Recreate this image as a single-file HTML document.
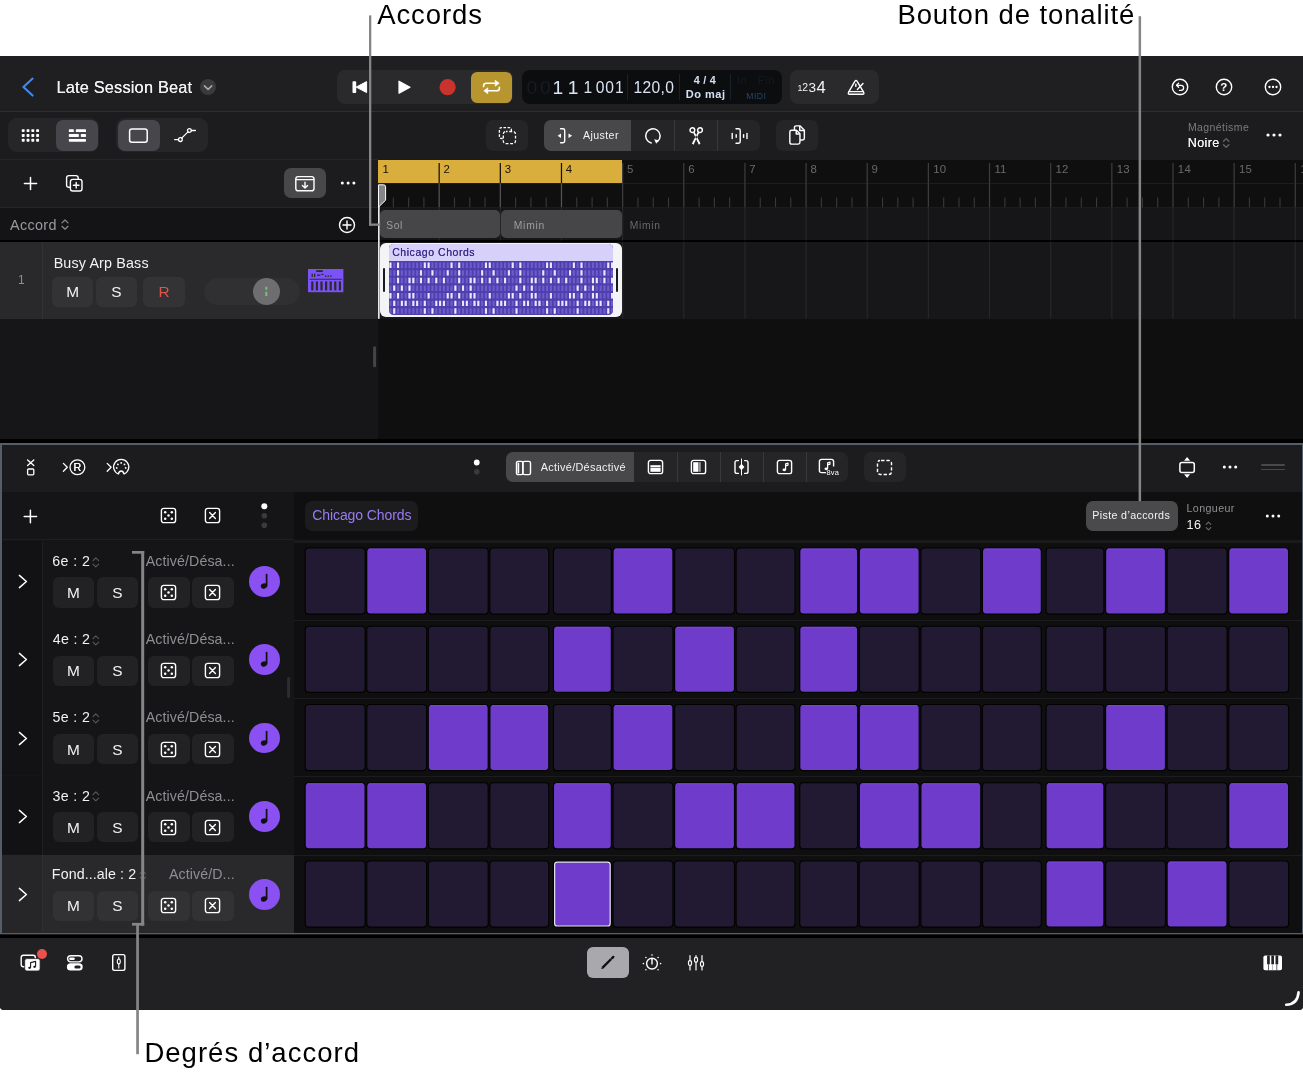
<!DOCTYPE html>
<html lang="fr"><head><meta charset="utf-8"><title>Logic Pro — Step Sequencer</title>
<style>
html,body{margin:0;padding:0;background:#fff;}
body{width:1303px;height:1075px;position:relative;overflow:hidden;font-family:"Liberation Sans",sans-serif;}
#app div,#app svg,#app span.a{position:absolute;box-sizing:border-box;}
#app{position:absolute;left:0;top:0;width:1303px;height:1075px;overflow:hidden;will-change:transform;}
svg{overflow:visible;}
.t{margin:0;}
</style></head><body><div id="app">
<div style="left:0px;top:56px;width:1303px;height:954px;background:#1f1f21;border-radius:0 0 4px 4px;"></div>
<div style="left:0px;top:111px;width:1303px;height:1px;background:#2f2f31;"></div>
<svg style="left:20px;top:76px;" width="16" height="22" viewBox="0 0 16 22"><path d="M12.6 2.6 L3.4 11.1 L12.6 19.6" fill="none" stroke="#3d8bf0" stroke-width="2.1" stroke-linecap="round" stroke-linejoin="round"/></svg>
<div class="t" style="top:77.00px;height:21px;line-height:21px;font-size:16.4px;color:#f2f2f4;white-space:nowrap;letter-spacing:0.16px;left:56.49px;text-shadow:0 0 0.4px #f2f2f4;">Late Session Beat</div>
<div style="left:199.6px;top:78.9px;width:16.2px;height:16.2px;background:#3a3a3c;border-radius:9px;"></div>
<svg style="left:199.6px;top:78.9px;" width="16.2" height="16.2" viewBox="0 0 16.2 16.2"><path d="M4.4 6.9 L8.1 10.4 L11.8 6.9" fill="none" stroke="#a9a9ae" stroke-width="1.5" stroke-linecap="round" stroke-linejoin="round"/></svg>
<div style="left:337px;top:70px;width:175.5px;height:33.5px;background:#2a2a2c;border-radius:8px;"></div>
<svg style="left:350px;top:78px;" width="20" height="18" viewBox="0 0 20 18"><rect x="2.5" y="3.3" width="3.7" height="11.6" rx="0.7" fill="#fff"/><path d="M16.6 3.6 L16.6 14.6 L6.2 9.1 Z" fill="#fff" stroke="#fff" stroke-width="1" stroke-linejoin="round"/></svg>
<svg style="left:396px;top:78px;" width="18" height="18" viewBox="0 0 18 18"><path d="M3 3.2 L14 9.2 L3 15.2 Z" fill="#fff" stroke="#fff" stroke-width="1.2" stroke-linejoin="round"/></svg>
<svg style="left:437px;top:77px;" width="22" height="22" viewBox="0 0 22 22"><circle cx="10.6" cy="10.2" r="8.1" fill="#c9332e"/></svg>
<div style="left:470.5px;top:71.8px;width:41.7px;height:30.8px;background:#b7962f;border-radius:6px;"></div>
<svg style="left:481px;top:78px;" width="21" height="18" viewBox="0 0 21 18"><g fill="none" stroke="#fff" stroke-width="1.6" stroke-linecap="round" stroke-linejoin="round"><path d="M2.6 8.6 V7.8 Q2.6 5.2 5.2 5.2 H15"/><path d="M18.4 9.4 V10.2 Q18.4 12.8 15.8 12.8 H6"/></g><path d="M14.2 2.2 L18.2 5.2 L14.2 8.2 Z M6.8 9.8 L2.8 12.8 L6.8 15.8 Z" fill="#fff" stroke="#fff" stroke-width="0.6" stroke-linejoin="round"/></svg>
<div style="left:522px;top:70px;width:259.5px;height:33.5px;background:#0c0d0f;border-radius:8px;"></div>
<div class="t" style="top:75.00px;height:25px;line-height:25px;font-size:19.2px;color:#151c23;white-space:nowrap;letter-spacing:2.73px;left:526.53px;">00</div>
<div class="t" style="top:75.00px;height:25px;line-height:25px;font-size:19.2px;color:#d9e5f4;white-space:nowrap;left:552.4px;">1</div>
<div class="t" style="top:75.00px;height:25px;line-height:25px;font-size:19.2px;color:#d9e5f4;white-space:nowrap;left:567.8px;">1</div>
<div class="t" style="top:78.00px;height:20px;line-height:20px;font-size:15.6px;color:#d9e5f4;white-space:nowrap;left:583.6px;">1</div>
<div class="t" style="top:78.00px;height:20px;line-height:20px;font-size:15.6px;color:#d9e5f4;white-space:nowrap;letter-spacing:0.93px;left:595.78px;">001</div>
<div style="left:626.9px;top:74px;width:1px;height:25.5px;background:#18222c;"></div>
<div class="t" style="top:78.00px;height:20px;line-height:20px;font-size:15.6px;color:#d9e5f4;white-space:nowrap;letter-spacing:0.38px;left:633.43px;">120,0</div>
<div style="left:678.7px;top:74px;width:1px;height:25.5px;background:#18222c;"></div>
<div class="t" style="top:73.00px;height:14px;line-height:14px;font-size:10.8px;color:#d3e0f2;white-space:nowrap;font-weight:700;letter-spacing:0.2px;left:693.84px;">4 / 4</div>
<div class="t" style="top:87.00px;height:14px;line-height:14px;font-size:11px;color:#d3e0f2;white-space:nowrap;font-weight:700;letter-spacing:0.52px;left:685.78px;">Do maj</div>
<div style="left:730.4px;top:74px;width:1px;height:25.5px;background:#18222c;"></div>
<div class="t" style="top:74.00px;height:14px;line-height:14px;font-size:10.4px;color:#141b23;white-space:nowrap;letter-spacing:0.93px;left:737.06px;">In</div>
<div class="t" style="top:74.00px;height:14px;line-height:14px;font-size:10.4px;color:#141b23;white-space:nowrap;letter-spacing:1.08px;left:757.67px;">Fin</div>
<div class="t" style="top:91.00px;height:11px;line-height:11px;font-size:8.6px;color:#294467;white-space:nowrap;letter-spacing:0.54px;left:746.21px;">MIDI</div>
<div style="left:789.5px;top:70px;width:89.5px;height:33.5px;background:#2a2a2c;border-radius:8px;"></div>
<div class="t" style="top:83.00px;height:11px;line-height:11px;font-size:8.8px;color:#f2f2f4;white-space:nowrap;left:797.6px;">1</div>
<div class="t" style="top:81.00px;height:14px;line-height:14px;font-size:10.4px;color:#f2f2f4;white-space:nowrap;left:802.3px;">2</div>
<div class="t" style="top:79.00px;height:18px;line-height:18px;font-size:13.6px;color:#f2f2f4;white-space:nowrap;left:808.6px;">3</div>
<div class="t" style="top:77.00px;height:22px;line-height:22px;font-size:16.6px;color:#f2f2f4;white-space:nowrap;left:816.6px;">4</div>
<svg style="left:846px;top:77px;" width="20" height="20" viewBox="0 0 20 20"><g fill="none" stroke="#fff" stroke-width="1.4" stroke-linejoin="round" stroke-linecap="round"><path d="M9 4.2 Q10 2.6 11 4.2 L17.6 15.2 Q18.6 17.2 16.6 17.2 H3.6 Q1.6 17.2 2.6 15.2 Z"/><path d="M3.4 14.6 H16.8"/><path d="M11.4 12.4 L17 6.4"/><path d="M9.8 7.2 V9.4"/></g></svg>
<svg style="left:1169.8px;top:77.2px;" width="20" height="20" viewBox="0 0 20 20"><circle cx="10" cy="10" r="7.7" fill="none" stroke="#fff" stroke-width="1.4"/><g fill="none" stroke="#fff" stroke-width="1.3" stroke-linecap="round" stroke-linejoin="round"><path d="M6.8 8.3 H11 Q13.6 8.3 13.6 10.7 Q13.6 13.3 11 13.3 H9.4"/><path d="M8.6 6.3 L6.5 8.3 L8.6 10.3"/></g></svg>
<svg style="left:1213.7px;top:77.2px;" width="20" height="20" viewBox="0 0 20 20"><circle cx="10" cy="10" r="7.7" fill="none" stroke="#fff" stroke-width="1.4"/></svg>
<svg style="left:1263.3px;top:77.2px;" width="20" height="20" viewBox="0 0 20 20"><circle cx="10" cy="10" r="7.7" fill="none" stroke="#fff" stroke-width="1.4"/><circle cx="6.5" cy="10" r="1.15" fill="#fff"/><circle cx="10" cy="10" r="1.15" fill="#fff"/><circle cx="13.5" cy="10" r="1.15" fill="#fff"/></svg>
<div class="t" style="top:80.00px;height:15px;line-height:15px;font-size:11.5px;color:#fff;white-space:nowrap;font-weight:700;left:1213.7px;width:20px;text-align:center;">?</div>
<div style="left:0px;top:112px;width:1303px;height:48px;background:#1c1c1e;"></div>
<div style="left:0px;top:159px;width:378px;height:1px;background:#262628;"></div>
<div style="left:8.1px;top:118.2px;width:90.5px;height:34px;background:#262629;border-radius:9px;"></div>
<div style="left:56.2px;top:120px;width:41.9px;height:30.5px;background:#47474b;border-radius:7px;"></div>
<div style="left:116.4px;top:118.2px;width:91.3px;height:34px;background:#262629;border-radius:9px;"></div>
<div style="left:117.7px;top:120px;width:41.9px;height:30.5px;background:#47474b;border-radius:7px;"></div>
<svg style="left:20px;top:127px;" width="21" height="16" viewBox="0 0 21 16"><rect x="1.75" y="2.15" width="2.9" height="2.9" rx="0.7" fill="#fff"/><rect x="6.55" y="2.15" width="2.9" height="2.9" rx="0.7" fill="#fff"/><rect x="11.35" y="2.15" width="2.9" height="2.9" rx="0.7" fill="#fff"/><rect x="16.15" y="2.15" width="2.9" height="2.9" rx="0.7" fill="#fff"/><rect x="1.75" y="7.00" width="2.9" height="2.9" rx="0.7" fill="#fff"/><rect x="6.55" y="7.00" width="2.9" height="2.9" rx="0.7" fill="#fff"/><rect x="11.35" y="7.00" width="2.9" height="2.9" rx="0.7" fill="#fff"/><rect x="16.15" y="7.00" width="2.9" height="2.9" rx="0.7" fill="#fff"/><rect x="1.75" y="11.85" width="2.9" height="2.9" rx="0.7" fill="#fff"/><rect x="6.55" y="11.85" width="2.9" height="2.9" rx="0.7" fill="#fff"/><rect x="11.35" y="11.85" width="2.9" height="2.9" rx="0.7" fill="#fff"/><rect x="16.15" y="11.85" width="2.9" height="2.9" rx="0.7" fill="#fff"/></svg>
<svg style="left:67px;top:127px;" width="21" height="16" viewBox="0 0 21 16"><g fill="#fff"><rect x="1.85" y="2.2" width="5" height="2.9" rx="0.7"/><rect x="8.8" y="2.2" width="10.2" height="2.9" rx="0.7"/><rect x="1.85" y="7.05" width="10" height="2.9" rx="0.7"/><rect x="13.8" y="7.05" width="5.2" height="2.9" rx="0.7"/><rect x="1.85" y="11.9" width="17.15" height="2.9" rx="0.7"/></g></svg>
<svg style="left:128px;top:127px;" width="21" height="17" viewBox="0 0 21 17"><rect x="1.6" y="2" width="17.6" height="13.2" rx="2.2" fill="none" stroke="#fff" stroke-width="1.5"/></svg>
<svg style="left:173px;top:126px;" width="24" height="18" viewBox="0 0 24 18"><g fill="none" stroke="#fff" stroke-width="1.3" stroke-linecap="round"><path d="M1.6 13.6 H5.4"/><circle cx="7.4" cy="13.6" r="1.9"/><path d="M8.7 12.1 L15 5.9"/><circle cx="16.4" cy="4.5" r="1.9"/><path d="M18.4 4.5 H22.4"/></g></svg>
<div style="left:486.2px;top:120px;width:41.8px;height:30.6px;background:#252527;border-radius:7px;"></div>
<svg style="left:497px;top:125px;" width="21" height="21" viewBox="0 0 21 21"><g fill="none" stroke="#fff" stroke-width="1.3" stroke-linejoin="round"><path d="M5.7 13.5 H4.6 Q2.4 13.5 2.4 11.3 V4.8 Q2.4 2.6 4.6 2.6 H12.2 Q14.4 2.6 14.4 4.8 V5.9" stroke-dasharray="2.6 1.5"/><rect x="6.3" y="6.5" width="12.2" height="12.2" rx="2.6" stroke-dasharray="2.9 1.7" stroke-dashoffset="1.2"/></g></svg>
<div style="left:543.7px;top:120px;width:216.4px;height:30.6px;background:#252527;border-radius:7px;"></div>
<div style="left:543.7px;top:120px;width:87.8px;height:30.6px;background:#48484b;border-radius:7px 0 0 7px;"></div>
<div style="left:674.2px;top:120px;width:1px;height:30.6px;background:#39393b;"></div>
<div style="left:717.2px;top:120px;width:1px;height:30.6px;background:#39393b;"></div>
<svg style="left:556px;top:126px;" width="18" height="18" viewBox="0 0 18 18"><g fill="none" stroke="#fff" stroke-width="1.4" stroke-linecap="round" stroke-linejoin="round"><path d="M4.6 2.7 H7 Q8.7 2.7 8.7 4.4 V15 Q8.7 16.7 7 16.7 H4.6"/></g><path d="M1.6 9.7 L5 7.5 V11.9 Z" fill="#fff"/><path d="M16.1 9.7 L12.5 7.4 V12 Z" fill="#fff"/></svg>
<div class="t" style="top:128.00px;height:14px;line-height:14px;font-size:10.6px;color:#f2f2f4;white-space:nowrap;letter-spacing:0.43px;left:582.9px;">Ajuster</div>
<svg style="left:643px;top:125.8px;" width="20" height="20" viewBox="0 0 20 20"><g fill="none" stroke="#fff" stroke-width="1.5" stroke-linecap="round"><path d="M8.2 16.9 A7.2 7.2 0 1 1 14.6 15.4"/></g><path d="M11.2 13.2 L15.6 14.2 L13.2 17.8 Z" fill="#fff"/></svg>
<svg style="left:685px;top:124.8px;" width="22.4" height="22.4" viewBox="0 0 20 20"><g fill="none" stroke="#fff" stroke-width="1.3" stroke-linecap="round"><circle cx="6.6" cy="4.6" r="2.1"/><circle cx="13.4" cy="4.6" r="2.1"/></g><path d="M7.2 6.6 L8.6 6.2 L13.8 16.6 L12.4 17.6 Z M12.8 6.6 L11.4 6.2 L6.2 16.6 L7.6 17.6 Z" fill="#fff"/></svg>
<svg style="left:728.6px;top:125.6px;" width="20" height="20" viewBox="0 0 20 20"><g fill="none" stroke="#fff" stroke-width="1.4" stroke-linecap="round" stroke-linejoin="round"><path d="M7 2.8 H9.6 Q11.2 2.8 11.2 4.4 V15.6 Q11.2 17.2 9.6 17.2 H7"/><path d="M3.2 7.4 V12.6"/><path d="M7.2 8.8 V11.2"/><path d="M14.6 8.8 V11.2"/><path d="M18 7.4 V12.6"/></g></svg>
<div style="left:775.6px;top:120px;width:42px;height:30.6px;background:#252527;border-radius:7px;"></div>
<svg style="left:784.6px;top:123.2px;" width="24.2" height="24.2" viewBox="0 0 22 22"><g fill="none" stroke="#fff" stroke-width="1.3" stroke-linejoin="round"><path d="M8.6 6.6 V4.2 Q8.6 2.6 10.2 2.6 H13.6 L17.6 6.6 V13.8 Q17.6 15.4 16 15.4 H13.8"/><path d="M13.4 2.8 V6.8 H17.4"/><path d="M4.4 8.2 Q4.4 6.6 6 6.6 H10.4 L13.6 9.8 V17.6 Q13.6 19.2 12 19.2 H6 Q4.4 19.2 4.4 17.6 Z"/><path d="M10.2 6.8 V10 H13.4"/></g></svg>
<div class="t" style="top:120.00px;height:14px;line-height:14px;font-size:10.5px;color:#7c7c80;white-space:nowrap;letter-spacing:0.4px;left:1187.96px;">Magnétisme</div>
<div class="t" style="top:135.00px;height:16px;line-height:16px;font-size:12.5px;color:#f5f5f7;white-space:nowrap;letter-spacing:0.4px;left:1187.8px;text-shadow:0 0 0.5px #f5f5f7;">Noire</div>
<svg style="left:1220.9px;top:136.2px;" width="10.4" height="13.8" viewBox="0 0 9 12"><g fill="none" stroke="#66666a" stroke-width="1.1" stroke-linecap="round" stroke-linejoin="round"><path d="M2.2 4.6 L4.5 2.3 L6.8 4.6"/><path d="M2.2 7.6 L4.5 9.9 L6.8 7.6"/></g></svg>
<svg style="left:1264.1px;top:130.3px;" width="20" height="10" viewBox="0 0 20 10"><circle cx="4" cy="5" r="1.6" fill="#fff"/><circle cx="10" cy="5" r="1.6" fill="#fff"/><circle cx="16" cy="5" r="1.6" fill="#fff"/></svg>
<div style="left:0px;top:160px;width:378px;height:47.5px;background:#1c1c1e;"></div>
<div style="left:0px;top:207px;width:378px;height:1px;background:#262628;"></div>
<svg style="left:22px;top:175px;" width="17" height="17" viewBox="0 0 17 17"><path d="M8.5 2.4 V14.6 M2.4 8.5 H14.6" stroke="#fff" stroke-width="1.5" stroke-linecap="round" fill="none"/></svg>
<svg style="left:64px;top:173px;" width="21" height="21" viewBox="0 0 21 21"><g fill="none" stroke="#fff" stroke-width="1.4" stroke-linejoin="round" stroke-linecap="round"><path d="M5.8 14.2 H4.9 Q2.6 14.2 2.6 11.9 V4.9 Q2.6 2.6 4.9 2.6 H11.9 Q14.2 2.6 14.2 4.9 V5.8"/><rect x="6.4" y="6.4" width="11.6" height="11.6" rx="2.3"/><path d="M12.2 9.4 V15 M9.4 12.2 H15"/></g></svg>
<div style="left:284px;top:167.7px;width:42px;height:30.4px;background:#48484a;border-radius:7px;"></div>
<svg style="left:294px;top:173.5px;" width="22" height="19" viewBox="0 0 22 19"><g fill="none" stroke="#fff" stroke-width="1.4" stroke-linejoin="round" stroke-linecap="round"><rect x="1.8" y="2.6" width="18.2" height="14.2" rx="2.4"/><path d="M2 5.6 H19.8"/><path d="M11 8.2 V13.6 M8.4 11.4 L11 13.9 L13.6 11.4"/></g></svg>
<svg style="left:338px;top:178px;" width="20" height="10" viewBox="0 0 20 10"><circle cx="4.3" cy="5" r="1.5" fill="#fff"/><circle cx="10.1" cy="5" r="1.5" fill="#fff"/><circle cx="15.9" cy="5" r="1.5" fill="#fff"/></svg>
<div style="left:0px;top:208px;width:378px;height:32.4px;background:#141416;"></div>
<div class="t" style="top:216.00px;height:19px;line-height:19px;font-size:14.4px;color:#9a9a9e;white-space:nowrap;letter-spacing:0.31px;left:10.1px;">Accord</div>
<svg style="left:60px;top:218px;" width="10" height="13" viewBox="0 0 10 13"><g fill="none" stroke="#8a8a8e" stroke-width="1.2" stroke-linecap="round" stroke-linejoin="round"><path d="M2 4.9 L5 2 L8 4.9"/><path d="M2 8.3 L5 11.2 L8 8.3"/></g></svg>
<svg style="left:337.3px;top:214.7px;" width="20" height="20" viewBox="0 0 20 20"><circle cx="10" cy="10" r="7.5" fill="none" stroke="#fff" stroke-width="1.4"/><path d="M10 6 V14 M6 10 H14" stroke="#fff" stroke-width="1.4" stroke-linecap="round"/></svg>
<div style="left:0px;top:240.4px;width:1303px;height:1.8px;background:#000;"></div>
<div style="left:0px;top:242.2px;width:378px;height:76.6px;background:#2a2a2c;"></div>
<div style="left:0px;top:242.2px;width:42px;height:76.6px;background:#29292b;"></div>
<div style="left:42px;top:242.2px;width:1px;height:76.6px;background:#333335;"></div>
<div class="t" style="top:272.00px;height:16px;line-height:16px;font-size:12px;color:#8e8e93;white-space:nowrap;left:11.3px;width:20px;text-align:center;">1</div>
<div class="t" style="top:254.00px;height:19px;line-height:19px;font-size:14.3px;color:#f2f2f4;white-space:nowrap;letter-spacing:0.16px;left:53.66px;">Busy Arp Bass</div>
<div style="left:51.8px;top:276.8px;width:41.6px;height:30.2px;background:#333335;border-radius:6px;"></div>
<div class="t" style="top:282.00px;height:20px;line-height:20px;font-size:15.4px;color:#f2f2f4;white-space:nowrap;left:52.6px;width:40px;text-align:center;">M</div>
<div style="left:95.7px;top:276.8px;width:41.6px;height:30.2px;background:#333335;border-radius:6px;"></div>
<div class="t" style="top:282.00px;height:20px;line-height:20px;font-size:15.4px;color:#f2f2f4;white-space:nowrap;left:96.5px;width:40px;text-align:center;">S</div>
<div style="left:143.3px;top:276.8px;width:41.6px;height:30.2px;background:#333335;border-radius:6px;"></div>
<div class="t" style="top:282.00px;height:20px;line-height:20px;font-size:15.4px;color:#e0524e;white-space:nowrap;left:144.1px;width:40px;text-align:center;">R</div>
<div style="left:204px;top:278.3px;width:96px;height:26.8px;background:#303032;border-radius:14px;"></div>
<div style="left:252.9px;top:278.3px;width:26.8px;height:26.8px;background:#6e6e70;border-radius:14px;"></div>
<svg style="left:264px;top:285px;" width="5" height="13" viewBox="0 0 5 13"><rect x="1.3" y="1.8" width="2" height="3" fill="#74c178"/><rect x="1.3" y="6.8" width="2" height="4.2" fill="#74c178"/></svg>
<svg style="left:308px;top:269px;" width="35.4" height="23.2" viewBox="0 0 35.4 23.2"><rect x="0" y="0" width="35.4" height="23.2" fill="#7b52f5"/><rect x="8.2" y="1.2" width="6.6" height="1.8" fill="#2a2a2c"/><rect x="3.6" y="4.6" width="1.2" height="3.4" fill="#2a2a2c"/><rect x="6" y="4.6" width="1.2" height="3.4" fill="#2a2a2c"/><rect x="9" y="5.6" width="3.4" height="1.2" fill="#2a2a2c"/><rect x="13.4" y="4.8" width="2" height="1.2" fill="#2a2a2c"/><rect x="17" y="6.4" width="1.4" height="1.4" fill="#2a2a2c"/><rect x="19.6" y="6.4" width="1.4" height="1.4" fill="#2a2a2c"/><rect x="22.2" y="6.4" width="1.4" height="1.4" fill="#2a2a2c"/><rect x="1.6" y="9.8" width="32.2" height="0.9" fill="#2a2a2c"/><rect x="3.2" y="12.4" width="2.2" height="9" fill="#2a2a2c"/><rect x="7.8" y="12.4" width="2.2" height="9" fill="#2a2a2c"/><rect x="12.4" y="12.4" width="2.2" height="9" fill="#2a2a2c"/><rect x="17.0" y="12.4" width="2.2" height="9" fill="#2a2a2c"/><rect x="21.6" y="12.4" width="2.2" height="9" fill="#2a2a2c"/><rect x="26.2" y="12.4" width="2.2" height="9" fill="#2a2a2c"/><rect x="30.8" y="12.4" width="2.2" height="9" fill="#2a2a2c"/></svg>
<div style="left:0px;top:318.8px;width:378px;height:120.6px;background:#161618;"></div>
<div style="left:378px;top:318.8px;width:925px;height:120.6px;background:#0f0f0f;"></div>
<svg style="left:370px;top:344px;" width="10" height="26" viewBox="0 0 10 26"><rect x="3.1" y="2.2" width="3" height="21" rx="1.5" fill="#444446"/></svg>
<div style="left:0px;top:439.4px;width:1303px;height:4.4px;background:#000;"></div>
<div style="left:378px;top:160px;width:925px;height:47.6px;background:#0f0f0f;"></div>
<div style="left:378px;top:183.2px;width:925px;height:1px;background:#1e1e20;"></div>
<div style="left:378px;top:207.4px;width:925px;height:33px;background:#161618;"></div>
<div style="left:378px;top:207.2px;width:925px;height:0.8px;background:#1c1c1e;"></div>
<div style="left:378px;top:242.2px;width:925px;height:76.6px;background:#171719;"></div>
<div style="left:378px;top:160px;width:244.2px;height:23.2px;background:#d9ae3c;"></div>
<svg style="left:378px;top:160px;overflow:hidden;" width="925" height="160" viewBox="0 0 925 160"><rect x="14.79" y="37.5" width="1.1" height="9.8" fill="#39393b"/><rect x="30.07" y="37.5" width="1.1" height="9.8" fill="#39393b"/><rect x="45.36" y="37.5" width="1.1" height="9.8" fill="#39393b"/><rect x="60.55" y="3" width="1.25" height="20.2" fill="#171208"/><rect x="60.55" y="23.2" width="1.25" height="24.2" fill="#545456"/><rect x="60.55" y="47.4" width="1.25" height="33" fill="#262628"/><rect x="60.55" y="82.2" width="1.25" height="76.6" fill="#262628"/><rect x="75.94" y="37.5" width="1.1" height="9.8" fill="#39393b"/><rect x="91.22" y="37.5" width="1.1" height="9.8" fill="#39393b"/><rect x="106.51" y="37.5" width="1.1" height="9.8" fill="#39393b"/><rect x="121.70" y="3" width="1.25" height="20.2" fill="#171208"/><rect x="121.70" y="23.2" width="1.25" height="24.2" fill="#545456"/><rect x="121.70" y="47.4" width="1.25" height="33" fill="#262628"/><rect x="121.70" y="82.2" width="1.25" height="76.6" fill="#262628"/><rect x="137.09" y="37.5" width="1.1" height="9.8" fill="#39393b"/><rect x="152.38" y="37.5" width="1.1" height="9.8" fill="#39393b"/><rect x="167.66" y="37.5" width="1.1" height="9.8" fill="#39393b"/><rect x="182.85" y="3" width="1.25" height="20.2" fill="#171208"/><rect x="182.85" y="23.2" width="1.25" height="24.2" fill="#545456"/><rect x="182.85" y="47.4" width="1.25" height="33" fill="#262628"/><rect x="182.85" y="82.2" width="1.25" height="76.6" fill="#262628"/><rect x="198.24" y="37.5" width="1.1" height="9.8" fill="#39393b"/><rect x="213.53" y="37.5" width="1.1" height="9.8" fill="#39393b"/><rect x="228.81" y="37.5" width="1.1" height="9.8" fill="#39393b"/><rect x="244.00" y="3" width="1.25" height="20.2" fill="#3c3c3e"/><rect x="244.00" y="23.2" width="1.25" height="24.2" fill="#3c3c3e"/><rect x="244.00" y="47.4" width="1.25" height="33" fill="#262628"/><rect x="244.00" y="82.2" width="1.25" height="76.6" fill="#262628"/><rect x="259.39" y="37.5" width="1.1" height="9.8" fill="#39393b"/><rect x="274.68" y="37.5" width="1.1" height="9.8" fill="#39393b"/><rect x="289.96" y="37.5" width="1.1" height="9.8" fill="#39393b"/><rect x="305.15" y="3" width="1.25" height="20.2" fill="#3c3c3e"/><rect x="305.15" y="23.2" width="1.25" height="24.2" fill="#3c3c3e"/><rect x="305.15" y="47.4" width="1.25" height="33" fill="#262628"/><rect x="305.15" y="82.2" width="1.25" height="76.6" fill="#262628"/><rect x="320.54" y="37.5" width="1.1" height="9.8" fill="#39393b"/><rect x="335.83" y="37.5" width="1.1" height="9.8" fill="#39393b"/><rect x="351.11" y="37.5" width="1.1" height="9.8" fill="#39393b"/><rect x="366.30" y="3" width="1.25" height="20.2" fill="#3c3c3e"/><rect x="366.30" y="23.2" width="1.25" height="24.2" fill="#3c3c3e"/><rect x="366.30" y="47.4" width="1.25" height="33" fill="#262628"/><rect x="366.30" y="82.2" width="1.25" height="76.6" fill="#262628"/><rect x="381.69" y="37.5" width="1.1" height="9.8" fill="#39393b"/><rect x="396.98" y="37.5" width="1.1" height="9.8" fill="#39393b"/><rect x="412.26" y="37.5" width="1.1" height="9.8" fill="#39393b"/><rect x="427.45" y="3" width="1.25" height="20.2" fill="#3c3c3e"/><rect x="427.45" y="23.2" width="1.25" height="24.2" fill="#3c3c3e"/><rect x="427.45" y="47.4" width="1.25" height="33" fill="#262628"/><rect x="427.45" y="82.2" width="1.25" height="76.6" fill="#262628"/><rect x="442.84" y="37.5" width="1.1" height="9.8" fill="#39393b"/><rect x="458.12" y="37.5" width="1.1" height="9.8" fill="#39393b"/><rect x="473.41" y="37.5" width="1.1" height="9.8" fill="#39393b"/><rect x="488.60" y="3" width="1.25" height="20.2" fill="#3c3c3e"/><rect x="488.60" y="23.2" width="1.25" height="24.2" fill="#3c3c3e"/><rect x="488.60" y="47.4" width="1.25" height="33" fill="#262628"/><rect x="488.60" y="82.2" width="1.25" height="76.6" fill="#262628"/><rect x="503.99" y="37.5" width="1.1" height="9.8" fill="#39393b"/><rect x="519.28" y="37.5" width="1.1" height="9.8" fill="#39393b"/><rect x="534.56" y="37.5" width="1.1" height="9.8" fill="#39393b"/><rect x="549.75" y="3" width="1.25" height="20.2" fill="#3c3c3e"/><rect x="549.75" y="23.2" width="1.25" height="24.2" fill="#3c3c3e"/><rect x="549.75" y="47.4" width="1.25" height="33" fill="#262628"/><rect x="549.75" y="82.2" width="1.25" height="76.6" fill="#262628"/><rect x="565.14" y="37.5" width="1.1" height="9.8" fill="#39393b"/><rect x="580.43" y="37.5" width="1.1" height="9.8" fill="#39393b"/><rect x="595.71" y="37.5" width="1.1" height="9.8" fill="#39393b"/><rect x="610.90" y="3" width="1.25" height="20.2" fill="#3c3c3e"/><rect x="610.90" y="23.2" width="1.25" height="24.2" fill="#3c3c3e"/><rect x="610.90" y="47.4" width="1.25" height="33" fill="#262628"/><rect x="610.90" y="82.2" width="1.25" height="76.6" fill="#262628"/><rect x="626.29" y="37.5" width="1.1" height="9.8" fill="#39393b"/><rect x="641.58" y="37.5" width="1.1" height="9.8" fill="#39393b"/><rect x="656.86" y="37.5" width="1.1" height="9.8" fill="#39393b"/><rect x="672.05" y="3" width="1.25" height="20.2" fill="#3c3c3e"/><rect x="672.05" y="23.2" width="1.25" height="24.2" fill="#3c3c3e"/><rect x="672.05" y="47.4" width="1.25" height="33" fill="#262628"/><rect x="672.05" y="82.2" width="1.25" height="76.6" fill="#262628"/><rect x="687.44" y="37.5" width="1.1" height="9.8" fill="#39393b"/><rect x="702.73" y="37.5" width="1.1" height="9.8" fill="#39393b"/><rect x="718.01" y="37.5" width="1.1" height="9.8" fill="#39393b"/><rect x="733.20" y="3" width="1.25" height="20.2" fill="#3c3c3e"/><rect x="733.20" y="23.2" width="1.25" height="24.2" fill="#3c3c3e"/><rect x="733.20" y="47.4" width="1.25" height="33" fill="#262628"/><rect x="733.20" y="82.2" width="1.25" height="76.6" fill="#262628"/><rect x="748.59" y="37.5" width="1.1" height="9.8" fill="#39393b"/><rect x="763.88" y="37.5" width="1.1" height="9.8" fill="#39393b"/><rect x="779.16" y="37.5" width="1.1" height="9.8" fill="#39393b"/><rect x="794.35" y="3" width="1.25" height="20.2" fill="#3c3c3e"/><rect x="794.35" y="23.2" width="1.25" height="24.2" fill="#3c3c3e"/><rect x="794.35" y="47.4" width="1.25" height="33" fill="#262628"/><rect x="794.35" y="82.2" width="1.25" height="76.6" fill="#262628"/><rect x="809.74" y="37.5" width="1.1" height="9.8" fill="#39393b"/><rect x="825.02" y="37.5" width="1.1" height="9.8" fill="#39393b"/><rect x="840.31" y="37.5" width="1.1" height="9.8" fill="#39393b"/><rect x="855.50" y="3" width="1.25" height="20.2" fill="#3c3c3e"/><rect x="855.50" y="23.2" width="1.25" height="24.2" fill="#3c3c3e"/><rect x="855.50" y="47.4" width="1.25" height="33" fill="#262628"/><rect x="855.50" y="82.2" width="1.25" height="76.6" fill="#262628"/><rect x="870.89" y="37.5" width="1.1" height="9.8" fill="#39393b"/><rect x="886.17" y="37.5" width="1.1" height="9.8" fill="#39393b"/><rect x="901.46" y="37.5" width="1.1" height="9.8" fill="#39393b"/><rect x="916.65" y="3" width="1.25" height="20.2" fill="#3c3c3e"/><rect x="916.65" y="23.2" width="1.25" height="24.2" fill="#3c3c3e"/><rect x="916.65" y="47.4" width="1.25" height="33" fill="#262628"/><rect x="916.65" y="82.2" width="1.25" height="76.6" fill="#262628"/></svg>
<div class="t" style="top:162.00px;height:15px;line-height:15px;font-size:11.4px;color:#171208;white-space:nowrap;letter-spacing:0.2px;left:382.4px;">1</div>
<div class="t" style="top:162.00px;height:15px;line-height:15px;font-size:11.4px;color:#171208;white-space:nowrap;letter-spacing:0.2px;left:443.55px;">2</div>
<div class="t" style="top:162.00px;height:15px;line-height:15px;font-size:11.4px;color:#171208;white-space:nowrap;letter-spacing:0.2px;left:504.7px;">3</div>
<div class="t" style="top:162.00px;height:15px;line-height:15px;font-size:11.4px;color:#171208;white-space:nowrap;letter-spacing:0.2px;left:565.85px;">4</div>
<div class="t" style="top:162.00px;height:15px;line-height:15px;font-size:11.4px;color:#6a6a6e;white-space:nowrap;letter-spacing:0.2px;left:627px;">5</div>
<div class="t" style="top:162.00px;height:15px;line-height:15px;font-size:11.4px;color:#6a6a6e;white-space:nowrap;letter-spacing:0.2px;left:688.15px;">6</div>
<div class="t" style="top:162.00px;height:15px;line-height:15px;font-size:11.4px;color:#6a6a6e;white-space:nowrap;letter-spacing:0.2px;left:749.3px;">7</div>
<div class="t" style="top:162.00px;height:15px;line-height:15px;font-size:11.4px;color:#6a6a6e;white-space:nowrap;letter-spacing:0.2px;left:810.45px;">8</div>
<div class="t" style="top:162.00px;height:15px;line-height:15px;font-size:11.4px;color:#6a6a6e;white-space:nowrap;letter-spacing:0.2px;left:871.6px;">9</div>
<div class="t" style="top:162.00px;height:15px;line-height:15px;font-size:11.4px;color:#6a6a6e;white-space:nowrap;letter-spacing:0.2px;left:933.25px;">10</div>
<div class="t" style="top:162.00px;height:15px;line-height:15px;font-size:11.4px;color:#6a6a6e;white-space:nowrap;letter-spacing:0.2px;left:994.4px;">11</div>
<div class="t" style="top:162.00px;height:15px;line-height:15px;font-size:11.4px;color:#6a6a6e;white-space:nowrap;letter-spacing:0.2px;left:1055.55px;">12</div>
<div class="t" style="top:162.00px;height:15px;line-height:15px;font-size:11.4px;color:#6a6a6e;white-space:nowrap;letter-spacing:0.2px;left:1116.7px;">13</div>
<div class="t" style="top:162.00px;height:15px;line-height:15px;font-size:11.4px;color:#6a6a6e;white-space:nowrap;letter-spacing:0.2px;left:1177.85px;">14</div>
<div class="t" style="top:162.00px;height:15px;line-height:15px;font-size:11.4px;color:#6a6a6e;white-space:nowrap;letter-spacing:0.2px;left:1239px;">15</div>
<div class="t" style="top:162.00px;height:15px;line-height:15px;font-size:11.4px;color:#6a6a6e;white-space:nowrap;letter-spacing:0.2px;left:1300.15px;">16</div>
<svg style="left:378px;top:183.6px;" width="9" height="24" viewBox="0 0 9 24"><path d="M0.5 0.8 H5.6 Q7.6 0.8 7.6 2.8 V16.2 L0.5 23 Z" fill="#868688" stroke="#fff" stroke-width="1"/></svg>
<svg style="left:376px;top:205px;" width="6" height="115" viewBox="0 0 6 115"><rect x="2.1" y="1" width="1.5" height="112.8" fill="#fff"/></svg>
<div style="left:379.9px;top:209.7px;width:120.3px;height:28.6px;background:#464648;border-radius:5px;"></div>
<div style="left:501px;top:209.7px;width:121.2px;height:28.6px;background:#464648;border-radius:5px;"></div>
<div class="t" style="top:219.00px;height:13px;line-height:13px;font-size:10.3px;color:#9d9da1;white-space:nowrap;letter-spacing:0.52px;left:386.34px;">Sol</div>
<div class="t" style="top:219.00px;height:13px;line-height:13px;font-size:10.3px;color:#9d9da1;white-space:nowrap;letter-spacing:0.76px;left:513.78px;">Mimin</div>
<div class="t" style="top:219.00px;height:13px;line-height:13px;font-size:10.3px;color:#68686c;white-space:nowrap;letter-spacing:0.71px;left:629.78px;">Mimin</div>
<div style="left:379.8px;top:243.4px;width:242.7px;height:73.2px;background:#f4f4f7;border-radius:6px;"></div>
<div style="left:388.8px;top:244.3px;width:224.2px;height:71.1px;background:#4e3eae;border-radius:4.5px;overflow:hidden;"><div style="left:0;top:0;width:100%;height:16.3px;background:#d6d0fb;"></div></div>
<div class="t" style="top:245.00px;height:14px;line-height:14px;font-size:10.5px;color:#3b2d8a;white-space:nowrap;letter-spacing:0.55px;left:392.18px;text-shadow:0 0 0.2px #3b2d8a;">Chicago Chords</div>
<div style="left:382.9px;top:268.2px;width:2px;height:23.8px;background:#1a1a1a;border-radius:1px;"></div>
<div style="left:616.4px;top:268.2px;width:2px;height:23.8px;background:#1a1a1a;border-radius:1px;"></div>
<svg style="left:388.8px;top:260.6px;overflow:hidden;border-radius:0 0 4.5px 4.5px;" width="224.2" height="54.8" viewBox="0 0 224.2 54.8"><path d="M0.37 1.6h2.1v51.2h-2.1zM4.19 1.6h2.1v51.2h-2.1zM8.01 1.6h2.1v51.2h-2.1zM11.83 1.6h2.1v51.2h-2.1zM15.65 1.6h2.1v51.2h-2.1zM19.47 1.6h2.1v51.2h-2.1zM23.30 1.6h2.1v51.2h-2.1zM27.12 1.6h2.1v51.2h-2.1zM30.94 1.6h2.1v51.2h-2.1zM34.76 1.6h2.1v51.2h-2.1zM38.58 1.6h2.1v51.2h-2.1zM42.41 1.6h2.1v51.2h-2.1zM46.23 1.6h2.1v51.2h-2.1zM50.05 1.6h2.1v51.2h-2.1zM53.87 1.6h2.1v51.2h-2.1zM57.69 1.6h2.1v51.2h-2.1zM61.52 1.6h2.1v51.2h-2.1zM65.34 1.6h2.1v51.2h-2.1zM69.16 1.6h2.1v51.2h-2.1zM72.98 1.6h2.1v51.2h-2.1zM76.80 1.6h2.1v51.2h-2.1zM80.63 1.6h2.1v51.2h-2.1zM84.45 1.6h2.1v51.2h-2.1zM88.27 1.6h2.1v51.2h-2.1zM92.09 1.6h2.1v51.2h-2.1zM95.91 1.6h2.1v51.2h-2.1zM99.73 1.6h2.1v51.2h-2.1zM103.56 1.6h2.1v51.2h-2.1zM107.38 1.6h2.1v51.2h-2.1zM111.20 1.6h2.1v51.2h-2.1zM115.02 1.6h2.1v51.2h-2.1zM118.84 1.6h2.1v51.2h-2.1zM122.67 1.6h2.1v51.2h-2.1zM126.49 1.6h2.1v51.2h-2.1zM130.31 1.6h2.1v51.2h-2.1zM134.13 1.6h2.1v51.2h-2.1zM137.95 1.6h2.1v51.2h-2.1zM141.77 1.6h2.1v51.2h-2.1zM145.60 1.6h2.1v51.2h-2.1zM149.42 1.6h2.1v51.2h-2.1zM153.24 1.6h2.1v51.2h-2.1zM157.06 1.6h2.1v51.2h-2.1zM160.88 1.6h2.1v51.2h-2.1zM164.71 1.6h2.1v51.2h-2.1zM168.53 1.6h2.1v51.2h-2.1zM172.35 1.6h2.1v51.2h-2.1zM176.17 1.6h2.1v51.2h-2.1zM179.99 1.6h2.1v51.2h-2.1zM183.82 1.6h2.1v51.2h-2.1zM187.64 1.6h2.1v51.2h-2.1zM191.46 1.6h2.1v51.2h-2.1zM195.28 1.6h2.1v51.2h-2.1zM199.10 1.6h2.1v51.2h-2.1zM202.92 1.6h2.1v51.2h-2.1zM206.75 1.6h2.1v51.2h-2.1zM210.57 1.6h2.1v51.2h-2.1zM214.39 1.6h2.1v51.2h-2.1zM218.21 1.6h2.1v51.2h-2.1zM222.03 1.6h2.1v51.2h-2.1z" fill="#6c5dc9"/><path d="M0 7.02h224.2v2.2h-224.2zM0 14.64h224.2v2.2h-224.2zM0 22.26h224.2v2.2h-224.2zM0 29.88h224.2v2.2h-224.2zM0 37.50h224.2v2.2h-224.2zM0 45.12h224.2v2.2h-224.2z" fill="#4e3eae"/><path d="M0.37 1.60h2.1v5.4h-2.1zM8.01 1.60h2.1v5.4h-2.1zM34.76 1.60h2.1v5.4h-2.1zM38.58 1.60h2.1v5.4h-2.1zM61.52 1.60h2.1v5.4h-2.1zM69.16 1.60h2.1v5.4h-2.1zM95.91 1.60h2.1v5.4h-2.1zM99.73 1.60h2.1v5.4h-2.1zM122.67 1.60h2.1v5.4h-2.1zM130.31 1.60h2.1v5.4h-2.1zM157.06 1.60h2.1v5.4h-2.1zM160.88 1.60h2.1v5.4h-2.1zM183.82 1.60h2.1v5.4h-2.1zM191.46 1.60h2.1v5.4h-2.1zM218.21 1.60h2.1v5.4h-2.1zM222.03 1.60h2.1v5.4h-2.1zM8.01 9.22h2.1v5.4h-2.1zM30.94 9.22h2.1v5.4h-2.1zM42.41 9.22h2.1v5.4h-2.1zM57.69 9.22h2.1v5.4h-2.1zM69.16 9.22h2.1v5.4h-2.1zM92.09 9.22h2.1v5.4h-2.1zM103.56 9.22h2.1v5.4h-2.1zM118.84 9.22h2.1v5.4h-2.1zM130.31 9.22h2.1v5.4h-2.1zM153.24 9.22h2.1v5.4h-2.1zM164.71 9.22h2.1v5.4h-2.1zM179.99 9.22h2.1v5.4h-2.1zM191.46 9.22h2.1v5.4h-2.1zM214.39 9.22h2.1v5.4h-2.1zM8.01 16.84h2.1v5.4h-2.1zM19.47 16.84h2.1v5.4h-2.1zM23.30 16.84h2.1v5.4h-2.1zM30.94 16.84h2.1v5.4h-2.1zM38.58 16.84h2.1v5.4h-2.1zM46.23 16.84h2.1v5.4h-2.1zM53.87 16.84h2.1v5.4h-2.1zM69.16 16.84h2.1v5.4h-2.1zM80.63 16.84h2.1v5.4h-2.1zM84.45 16.84h2.1v5.4h-2.1zM92.09 16.84h2.1v5.4h-2.1zM99.73 16.84h2.1v5.4h-2.1zM107.38 16.84h2.1v5.4h-2.1zM115.02 16.84h2.1v5.4h-2.1zM130.31 16.84h2.1v5.4h-2.1zM141.77 16.84h2.1v5.4h-2.1zM145.60 16.84h2.1v5.4h-2.1zM153.24 16.84h2.1v5.4h-2.1zM160.88 16.84h2.1v5.4h-2.1zM168.53 16.84h2.1v5.4h-2.1zM176.17 16.84h2.1v5.4h-2.1zM191.46 16.84h2.1v5.4h-2.1zM202.92 16.84h2.1v5.4h-2.1zM206.75 16.84h2.1v5.4h-2.1zM214.39 16.84h2.1v5.4h-2.1zM222.03 16.84h2.1v5.4h-2.1zM4.19 24.46h2.1v5.4h-2.1zM11.83 24.46h2.1v5.4h-2.1zM19.47 24.46h2.1v5.4h-2.1zM65.34 24.46h2.1v5.4h-2.1zM72.98 24.46h2.1v5.4h-2.1zM80.63 24.46h2.1v5.4h-2.1zM126.49 24.46h2.1v5.4h-2.1zM134.13 24.46h2.1v5.4h-2.1zM141.77 24.46h2.1v5.4h-2.1zM187.64 24.46h2.1v5.4h-2.1zM195.28 24.46h2.1v5.4h-2.1zM202.92 24.46h2.1v5.4h-2.1zM0.37 32.08h2.1v5.4h-2.1zM8.01 32.08h2.1v5.4h-2.1zM19.47 32.08h2.1v5.4h-2.1zM23.30 32.08h2.1v5.4h-2.1zM38.58 32.08h2.1v5.4h-2.1zM57.69 32.08h2.1v5.4h-2.1zM61.52 32.08h2.1v5.4h-2.1zM69.16 32.08h2.1v5.4h-2.1zM80.63 32.08h2.1v5.4h-2.1zM84.45 32.08h2.1v5.4h-2.1zM99.73 32.08h2.1v5.4h-2.1zM118.84 32.08h2.1v5.4h-2.1zM122.67 32.08h2.1v5.4h-2.1zM130.31 32.08h2.1v5.4h-2.1zM141.77 32.08h2.1v5.4h-2.1zM145.60 32.08h2.1v5.4h-2.1zM160.88 32.08h2.1v5.4h-2.1zM179.99 32.08h2.1v5.4h-2.1zM183.82 32.08h2.1v5.4h-2.1zM191.46 32.08h2.1v5.4h-2.1zM202.92 32.08h2.1v5.4h-2.1zM206.75 32.08h2.1v5.4h-2.1zM222.03 32.08h2.1v5.4h-2.1zM4.19 39.70h2.1v5.4h-2.1zM11.83 39.70h2.1v5.4h-2.1zM15.65 39.70h2.1v5.4h-2.1zM23.30 39.70h2.1v5.4h-2.1zM27.12 39.70h2.1v5.4h-2.1zM34.76 39.70h2.1v5.4h-2.1zM46.23 39.70h2.1v5.4h-2.1zM50.05 39.70h2.1v5.4h-2.1zM53.87 39.70h2.1v5.4h-2.1zM65.34 39.70h2.1v5.4h-2.1zM72.98 39.70h2.1v5.4h-2.1zM76.80 39.70h2.1v5.4h-2.1zM84.45 39.70h2.1v5.4h-2.1zM88.27 39.70h2.1v5.4h-2.1zM95.91 39.70h2.1v5.4h-2.1zM107.38 39.70h2.1v5.4h-2.1zM111.20 39.70h2.1v5.4h-2.1zM115.02 39.70h2.1v5.4h-2.1zM126.49 39.70h2.1v5.4h-2.1zM134.13 39.70h2.1v5.4h-2.1zM137.95 39.70h2.1v5.4h-2.1zM145.60 39.70h2.1v5.4h-2.1zM149.42 39.70h2.1v5.4h-2.1zM157.06 39.70h2.1v5.4h-2.1zM168.53 39.70h2.1v5.4h-2.1zM172.35 39.70h2.1v5.4h-2.1zM176.17 39.70h2.1v5.4h-2.1zM187.64 39.70h2.1v5.4h-2.1zM195.28 39.70h2.1v5.4h-2.1zM199.10 39.70h2.1v5.4h-2.1zM206.75 39.70h2.1v5.4h-2.1zM210.57 39.70h2.1v5.4h-2.1zM218.21 39.70h2.1v5.4h-2.1zM4.19 47.32h2.1v5.4h-2.1zM34.76 47.32h2.1v5.4h-2.1zM42.41 47.32h2.1v5.4h-2.1zM65.34 47.32h2.1v5.4h-2.1zM95.91 47.32h2.1v5.4h-2.1zM103.56 47.32h2.1v5.4h-2.1zM126.49 47.32h2.1v5.4h-2.1zM157.06 47.32h2.1v5.4h-2.1zM164.71 47.32h2.1v5.4h-2.1zM187.64 47.32h2.1v5.4h-2.1zM218.21 47.32h2.1v5.4h-2.1z" fill="#ece6ff"/></svg>
<div style="left:0px;top:443px;width:1303px;height:491.4px;background:#525e6a;"></div>
<div style="left:2px;top:445px;width:1299.8px;height:47px;background:#1c1c1e;"></div>
<div style="left:2px;top:492px;width:292.3px;height:48px;background:#151517;"></div>
<div style="left:294.3px;top:492px;width:1007.5px;height:48px;background:#0f0f0f;"></div>
<div style="left:2px;top:540px;width:292.3px;height:392.6px;background:#151517;"></div>
<div style="left:294.3px;top:540px;width:1007.5px;height:392.6px;background:#0f0f0f;"></div>
<div style="left:2px;top:539px;width:292.3px;height:1px;background:#1f1f21;"></div>
<div style="left:294.3px;top:539.6px;width:1007.5px;height:3px;background:#1a1a1c;"></div>
<svg style="left:24px;top:457px;" width="14" height="21" viewBox="0 0 14 21"><g fill="none" stroke="#fff" stroke-width="1.3" stroke-linecap="round" stroke-linejoin="round"><path d="M3.6 3 L9.8 8.6 M9.8 3 L3.6 8.6"/><rect x="3.6" y="12" width="6.2" height="5.8" rx="1"/></g></svg>
<svg style="left:61px;top:457px;" width="28" height="21" viewBox="0 0 28 21"><g fill="none" stroke="#fff" stroke-width="1.3" stroke-linecap="round" stroke-linejoin="round"><path d="M2.4 6.4 L6.3 10.3 L2.4 14.2"/><circle cx="16.4" cy="10.3" r="7.4"/></g></svg>
<div class="t" style="top:460.00px;height:14px;line-height:14px;font-size:10.8px;color:#fff;white-space:nowrap;left:70.5px;width:14px;text-align:center;text-shadow:0 0 0.4px #fff;">R</div>
<svg style="left:105px;top:457px;" width="28" height="21" viewBox="0 0 28 21"><g fill="none" stroke="#fff" stroke-width="1.3" stroke-linecap="round" stroke-linejoin="round"><path d="M2.2 6.4 L6.1 10.3 L2.2 14.2"/><path d="M13.3 17 A7.6 7.6 0 1 1 19.1 17 Q18.2 14 16.2 14 Q14.2 14 13.3 17 Z"/></g><circle cx="11.7" cy="10.9" r="0.9" fill="#fff"/><circle cx="12.9" cy="7.4" r="0.9" fill="#fff"/><circle cx="16.2" cy="5.9" r="0.9" fill="#fff"/><circle cx="19.5" cy="7.4" r="0.9" fill="#fff"/><circle cx="20.7" cy="10.9" r="0.9" fill="#fff"/></svg>
<svg style="left:470px;top:456px;" width="14" height="24" viewBox="0 0 14 24"><circle cx="6.75" cy="6.5" r="2.9" fill="#fff"/><circle cx="6.75" cy="15.8" r="2.8" fill="#3a3a3c"/></svg>
<div style="left:505.5px;top:451.8px;width:342.6px;height:30.4px;background:#252527;border-radius:7px;"></div>
<div style="left:505.5px;top:451.8px;width:128.3px;height:30.4px;background:#48484a;border-radius:7px 0 0 7px;"></div>
<div style="left:677.2px;top:451.8px;width:1px;height:30.4px;background:#39393b;"></div>
<div style="left:720.2px;top:451.8px;width:1px;height:30.4px;background:#39393b;"></div>
<div style="left:763.2px;top:451.8px;width:1px;height:30.4px;background:#39393b;"></div>
<div style="left:806.2px;top:451.8px;width:1px;height:30.4px;background:#39393b;"></div>
<svg style="left:514.5px;top:459.5px;" width="17" height="16" viewBox="0 0 17 16"><g fill="none" stroke="#fff" stroke-width="1.4" stroke-linejoin="round"><rect x="1.5" y="1.4" width="6.4" height="13.2" rx="1.6"/><rect x="7.9" y="1.4" width="7.6" height="13.2" rx="1.6"/></g><rect x="2.6" y="2.6" width="1.6" height="10.8" fill="#fff"/></svg>
<div class="t" style="top:460.00px;height:14px;line-height:14px;font-size:10.9px;color:#f2f2f4;white-space:nowrap;letter-spacing:0.28px;left:540.8px;">Activé/Désactivé</div>
<svg style="left:647px;top:458.9px;" width="17" height="16" viewBox="0 0 17 16"><rect x="1.4" y="1.4" width="14.2" height="13.2" rx="2.2" fill="none" stroke="#fff" stroke-width="1.4"/><rect x="3.4" y="6.2" width="10.2" height="2.2" fill="#fff"/><rect x="3.4" y="9" width="10.2" height="3.8" fill="#fff"/></svg>
<svg style="left:690px;top:458.9px;" width="17" height="16" viewBox="0 0 17 16"><rect x="1.4" y="1.4" width="14.2" height="13.2" rx="2.2" fill="none" stroke="#fff" stroke-width="1.4"/><rect x="3.2" y="3.2" width="5" height="9.6" fill="#fff"/><rect x="8.2" y="3.2" width="2.6" height="9.6" fill="#9a9a9e"/></svg>
<svg style="left:733px;top:458px;" width="17" height="18" viewBox="0 0 17 18"><g fill="none" stroke="#fff" stroke-width="1.4" stroke-linejoin="round" stroke-linecap="round"><path d="M5.4 2.6 H4 Q2 2.6 2 4.6 V13.4 Q2 15.4 4 15.4 H5.4"/><path d="M11.6 2.6 H13 Q15 2.6 15 4.6 V13.4 Q15 15.4 13 15.4 H11.6"/><path d="M8.5 1 V17" stroke-width="1"/></g><path d="M8.5 5.8 L11.4 9 L8.5 12.2 L5.6 9 Z" fill="#fff"/></svg>
<svg style="left:776px;top:458.9px;" width="17" height="16" viewBox="0 0 17 16"><rect x="1.4" y="1.4" width="14.2" height="13.2" rx="2.2" fill="none" stroke="#fff" stroke-width="1.4"/><path d="M9.6 10.4 V4.9 L12 4.2 V6.2 L9.6 6.9" fill="none" stroke="#fff" stroke-width="1.2" stroke-linejoin="round"/><ellipse cx="8.3" cy="10.8" rx="1.8" ry="1.4" fill="#fff"/></svg>
<svg style="left:817.5px;top:458.2px;" width="17" height="16" viewBox="0 0 17 16"><path d="M8 14.6 H3.6 Q1.4 14.6 1.4 12.4 V3.6 Q1.4 1.4 3.6 1.4 H13.4 Q15.6 1.4 15.6 3.6 V8.6" fill="none" stroke="#fff" stroke-width="1.4"/><path d="M9.6 10.4 V4.9 L12 4.2 V6.2 L9.6 6.9" fill="none" stroke="#fff" stroke-width="1.2" stroke-linejoin="round"/><ellipse cx="8.3" cy="10.8" rx="1.8" ry="1.4" fill="#fff"/></svg>
<div class="t" style="top:468.00px;height:10px;line-height:10px;font-size:7.4px;color:#fff;white-space:nowrap;letter-spacing:0.21px;left:826.47px;">8va</div>
<div style="left:863.8px;top:451.8px;width:42px;height:30.4px;background:#252527;border-radius:7px;"></div>
<svg style="left:876px;top:458.5px;" width="17" height="17" viewBox="0 0 17 17"><rect x="1.5" y="1.5" width="14" height="14" rx="2.6" fill="none" stroke="#fff" stroke-width="1.4" stroke-dasharray="3.4 1.9" stroke-dashoffset="-1"/></svg>
<svg style="left:1176.7px;top:456px;" width="20" height="23" viewBox="0 0 20 23"><rect x="2.9" y="6.6" width="14.4" height="9.8" rx="2" fill="none" stroke="#fff" stroke-width="1.5"/><path d="M10.1 1 L13.1 4.8 H7.1 Z M10.1 22 L13.1 18.2 H7.1 Z" fill="#fff"/></svg>
<svg style="left:1220.2px;top:462px;" width="20" height="10" viewBox="0 0 20 10"><circle cx="4.3" cy="5" r="1.5" fill="#fff"/><circle cx="10" cy="5" r="1.5" fill="#fff"/><circle cx="15.7" cy="5" r="1.5" fill="#fff"/></svg>
<div style="left:1261.4px;top:464.4px;width:23.6px;height:1.3px;background:#48484a;border-radius:1px;"></div>
<div style="left:1261.4px;top:468.8px;width:23.6px;height:1.3px;background:#48484a;border-radius:1px;"></div>
<svg style="left:22px;top:507.6px;" width="17" height="17" viewBox="0 0 17 17"><path d="M8.4 2.3 V14.7 M2.2 8.5 H14.6" stroke="#fff" stroke-width="1.5" stroke-linecap="round" fill="none"/></svg>
<svg style="left:160px;top:507.1px;" width="17" height="17" viewBox="0 0 17 17"><rect x="1.4" y="1.4" width="14.2" height="14.2" rx="2.4" fill="none" stroke="#fff" stroke-width="1.4"/><circle cx="5.2" cy="5.2" r="1.25" fill="#fff"/><circle cx="11.8" cy="5.2" r="1.25" fill="#fff"/><circle cx="8.5" cy="8.5" r="1.25" fill="#fff"/><circle cx="5.2" cy="11.8" r="1.25" fill="#fff"/><circle cx="11.8" cy="11.8" r="1.25" fill="#fff"/></svg>
<svg style="left:204px;top:507.1px;" width="17" height="17" viewBox="0 0 17 17"><rect x="1.4" y="1.4" width="14.2" height="14.2" rx="2.4" fill="none" stroke="#fff" stroke-width="1.4"/><path d="M5.6 5.6 L11.4 11.4 M11.4 5.6 L5.6 11.4" stroke="#fff" stroke-width="1.4" stroke-linecap="round"/></svg>
<svg style="left:257px;top:500px;" width="14" height="32" viewBox="0 0 14 32"><circle cx="7.3" cy="6.2" r="3" fill="#fff"/><circle cx="7.3" cy="15.7" r="2.8" fill="#3a3a3c"/><circle cx="7.3" cy="25.2" r="2.8" fill="#3a3a3c"/></svg>
<div style="left:305px;top:501px;width:113px;height:29.6px;background:#1c1c1e;border-radius:7px;"></div>
<div class="t" style="top:506.00px;height:18px;line-height:18px;font-size:14px;color:#9a7bf2;white-space:nowrap;letter-spacing:-0.1px;left:312.3px;">Chicago Chords</div>
<div style="left:1086.4px;top:501px;width:91.3px;height:30px;background:#4a4a4c;border-radius:7px;"></div>
<div class="t" style="top:508.00px;height:14px;line-height:14px;font-size:10.7px;color:#f2f2f4;white-space:nowrap;letter-spacing:0.36px;left:1092.24px;">Piste d’accords</div>
<div class="t" style="top:501.00px;height:14px;line-height:14px;font-size:10.7px;color:#8e8e93;white-space:nowrap;letter-spacing:0.39px;left:1186.54px;">Longueur</div>
<div class="t" style="top:517.00px;height:16px;line-height:16px;font-size:12.6px;color:#f2f2f4;white-space:nowrap;letter-spacing:0.66px;left:1186.46px;">16</div>
<svg style="left:1203.6px;top:520.2px;" width="9" height="12" viewBox="0 0 9 12"><g fill="none" stroke="#6a6a6e" stroke-width="1.1" stroke-linecap="round" stroke-linejoin="round"><path d="M2.2 4.4 L4.5 2.1 L6.8 4.4"/><path d="M2.2 7.6 L4.5 9.9 L6.8 7.6"/></g></svg>
<svg style="left:1263px;top:510.7px;" width="20" height="10" viewBox="0 0 20 10"><circle cx="4.3" cy="5" r="1.5" fill="#fff"/><circle cx="10" cy="5" r="1.5" fill="#fff"/><circle cx="15.7" cy="5" r="1.5" fill="#fff"/></svg>
<div style="left:2px;top:540.6px;width:40.2px;height:78.3px;background:#121214;"></div>
<div style="left:42.2px;top:541.5px;width:1px;height:78.3px;background:#202022;"></div>
<svg style="left:16px;top:573px;" width="14" height="17" viewBox="0 0 14 17"><path d="M3.4 2.4 L10.4 8.5 L3.4 14.6" fill="none" stroke="#fff" stroke-width="1.5" stroke-linecap="round" stroke-linejoin="round"/></svg>
<div class="t" style="top:552.00px;height:18px;line-height:18px;font-size:14.2px;color:#f2f2f4;white-space:nowrap;letter-spacing:0.4px;left:52.29px;">6e : 2</div>
<svg style="left:91.4px;top:555.5px;" width="10" height="13" viewBox="0 0 10 13"><g fill="none" stroke="#5a5a5e" stroke-width="1.1" stroke-linecap="round" stroke-linejoin="round"><path d="M2 4.7 L4.8 1.9 L7.6 4.7"/><path d="M2 8.1 L4.8 10.9 L7.6 8.1"/></g></svg>
<div class="t" style="top:552.00px;height:18px;line-height:18px;font-size:14.2px;color:#8e8e93;white-space:nowrap;letter-spacing:0.1px;left:145.8px;">Activé/Désa...</div>
<div style="left:53px;top:577.4px;width:41.3px;height:30.2px;background:#222224;border-radius:6px;"></div>
<div class="t" style="top:583.00px;height:20px;line-height:20px;font-size:15.4px;color:#f2f2f4;white-space:nowrap;left:53.4px;width:40px;text-align:center;">M</div>
<div style="left:96.9px;top:577.4px;width:41.3px;height:30.2px;background:#222224;border-radius:6px;"></div>
<div class="t" style="top:583.00px;height:20px;line-height:20px;font-size:15.4px;color:#f2f2f4;white-space:nowrap;left:97.3px;width:40px;text-align:center;">S</div>
<div style="left:148.2px;top:577.4px;width:41.4px;height:30.2px;background:#222224;border-radius:6px;"></div>
<div style="left:192.1px;top:577.4px;width:41.5px;height:30.2px;background:#222224;border-radius:6px;"></div>
<svg style="left:160px;top:584.1px;" width="17" height="17" viewBox="0 0 17 17"><rect x="1.4" y="1.4" width="14.2" height="14.2" rx="2.4" fill="none" stroke="#fff" stroke-width="1.4"/><circle cx="5.2" cy="5.2" r="1.25" fill="#fff"/><circle cx="11.8" cy="5.2" r="1.25" fill="#fff"/><circle cx="8.5" cy="8.5" r="1.25" fill="#fff"/><circle cx="5.2" cy="11.8" r="1.25" fill="#fff"/><circle cx="11.8" cy="11.8" r="1.25" fill="#fff"/></svg>
<svg style="left:204px;top:584.1px;" width="17" height="17" viewBox="0 0 17 17"><rect x="1.4" y="1.4" width="14.2" height="14.2" rx="2.4" fill="none" stroke="#fff" stroke-width="1.4"/><path d="M5.6 5.6 L11.4 11.4 M11.4 5.6 L5.6 11.4" stroke="#fff" stroke-width="1.4" stroke-linecap="round"/></svg>
<div style="left:248.9px;top:566.1px;width:30.8px;height:30.8px;background:#8a50f2;border-radius:16px;"></div>
<svg style="left:256px;top:572px;" width="17" height="20" viewBox="0 0 17 20"><path d="M10.6 2.6 V13.6" stroke="#111" stroke-width="1.7" stroke-linecap="round"/><ellipse cx="8" cy="14" rx="3.2" ry="2.5" transform="rotate(-18 8 14)" fill="#111"/></svg>
<div style="left:2px;top:618.9px;width:40.2px;height:78.3px;background:#121214;"></div>
<div style="left:42.2px;top:619.8px;width:1px;height:78.3px;background:#202022;"></div>
<div style="left:294.3px;top:619.6px;width:1007.5px;height:1.2px;background:#1c1c1e;"></div>
<svg style="left:16px;top:651.3px;" width="14" height="17" viewBox="0 0 14 17"><path d="M3.4 2.4 L10.4 8.5 L3.4 14.6" fill="none" stroke="#fff" stroke-width="1.5" stroke-linecap="round" stroke-linejoin="round"/></svg>
<div class="t" style="top:630.00px;height:18px;line-height:18px;font-size:14.2px;color:#f2f2f4;white-space:nowrap;letter-spacing:0.32px;left:52.72px;">4e : 2</div>
<svg style="left:91.4px;top:633.8px;" width="10" height="13" viewBox="0 0 10 13"><g fill="none" stroke="#5a5a5e" stroke-width="1.1" stroke-linecap="round" stroke-linejoin="round"><path d="M2 4.7 L4.8 1.9 L7.6 4.7"/><path d="M2 8.1 L4.8 10.9 L7.6 8.1"/></g></svg>
<div class="t" style="top:630.00px;height:18px;line-height:18px;font-size:14.2px;color:#8e8e93;white-space:nowrap;letter-spacing:0.1px;left:145.8px;">Activé/Désa...</div>
<div style="left:53px;top:655.7px;width:41.3px;height:30.2px;background:#222224;border-radius:6px;"></div>
<div class="t" style="top:661.00px;height:20px;line-height:20px;font-size:15.4px;color:#f2f2f4;white-space:nowrap;left:53.4px;width:40px;text-align:center;">M</div>
<div style="left:96.9px;top:655.7px;width:41.3px;height:30.2px;background:#222224;border-radius:6px;"></div>
<div class="t" style="top:661.00px;height:20px;line-height:20px;font-size:15.4px;color:#f2f2f4;white-space:nowrap;left:97.3px;width:40px;text-align:center;">S</div>
<div style="left:148.2px;top:655.7px;width:41.4px;height:30.2px;background:#222224;border-radius:6px;"></div>
<div style="left:192.1px;top:655.7px;width:41.5px;height:30.2px;background:#222224;border-radius:6px;"></div>
<svg style="left:160px;top:662.4px;" width="17" height="17" viewBox="0 0 17 17"><rect x="1.4" y="1.4" width="14.2" height="14.2" rx="2.4" fill="none" stroke="#fff" stroke-width="1.4"/><circle cx="5.2" cy="5.2" r="1.25" fill="#fff"/><circle cx="11.8" cy="5.2" r="1.25" fill="#fff"/><circle cx="8.5" cy="8.5" r="1.25" fill="#fff"/><circle cx="5.2" cy="11.8" r="1.25" fill="#fff"/><circle cx="11.8" cy="11.8" r="1.25" fill="#fff"/></svg>
<svg style="left:204px;top:662.4px;" width="17" height="17" viewBox="0 0 17 17"><rect x="1.4" y="1.4" width="14.2" height="14.2" rx="2.4" fill="none" stroke="#fff" stroke-width="1.4"/><path d="M5.6 5.6 L11.4 11.4 M11.4 5.6 L5.6 11.4" stroke="#fff" stroke-width="1.4" stroke-linecap="round"/></svg>
<div style="left:248.9px;top:644.4px;width:30.8px;height:30.8px;background:#8a50f2;border-radius:16px;"></div>
<svg style="left:256px;top:650.3px;" width="17" height="20" viewBox="0 0 17 20"><path d="M10.6 2.6 V13.6" stroke="#111" stroke-width="1.7" stroke-linecap="round"/><ellipse cx="8" cy="14" rx="3.2" ry="2.5" transform="rotate(-18 8 14)" fill="#111"/></svg>
<div style="left:2px;top:697.2px;width:40.2px;height:78.3px;background:#121214;"></div>
<div style="left:42.2px;top:698.1px;width:1px;height:78.3px;background:#202022;"></div>
<div style="left:294.3px;top:697.9px;width:1007.5px;height:1.2px;background:#1c1c1e;"></div>
<svg style="left:16px;top:729.6px;" width="14" height="17" viewBox="0 0 14 17"><path d="M3.4 2.4 L10.4 8.5 L3.4 14.6" fill="none" stroke="#fff" stroke-width="1.5" stroke-linecap="round" stroke-linejoin="round"/></svg>
<div class="t" style="top:708.00px;height:18px;line-height:18px;font-size:14.2px;color:#f2f2f4;white-space:nowrap;letter-spacing:0.38px;left:52.43px;">5e : 2</div>
<svg style="left:91.4px;top:712.1px;" width="10" height="13" viewBox="0 0 10 13"><g fill="none" stroke="#5a5a5e" stroke-width="1.1" stroke-linecap="round" stroke-linejoin="round"><path d="M2 4.7 L4.8 1.9 L7.6 4.7"/><path d="M2 8.1 L4.8 10.9 L7.6 8.1"/></g></svg>
<div class="t" style="top:708.00px;height:18px;line-height:18px;font-size:14.2px;color:#8e8e93;white-space:nowrap;letter-spacing:0.1px;left:145.8px;">Activé/Désa...</div>
<div style="left:53px;top:734px;width:41.3px;height:30.2px;background:#222224;border-radius:6px;"></div>
<div class="t" style="top:740.00px;height:20px;line-height:20px;font-size:15.4px;color:#f2f2f4;white-space:nowrap;left:53.4px;width:40px;text-align:center;">M</div>
<div style="left:96.9px;top:734px;width:41.3px;height:30.2px;background:#222224;border-radius:6px;"></div>
<div class="t" style="top:740.00px;height:20px;line-height:20px;font-size:15.4px;color:#f2f2f4;white-space:nowrap;left:97.3px;width:40px;text-align:center;">S</div>
<div style="left:148.2px;top:734px;width:41.4px;height:30.2px;background:#222224;border-radius:6px;"></div>
<div style="left:192.1px;top:734px;width:41.5px;height:30.2px;background:#222224;border-radius:6px;"></div>
<svg style="left:160px;top:740.7px;" width="17" height="17" viewBox="0 0 17 17"><rect x="1.4" y="1.4" width="14.2" height="14.2" rx="2.4" fill="none" stroke="#fff" stroke-width="1.4"/><circle cx="5.2" cy="5.2" r="1.25" fill="#fff"/><circle cx="11.8" cy="5.2" r="1.25" fill="#fff"/><circle cx="8.5" cy="8.5" r="1.25" fill="#fff"/><circle cx="5.2" cy="11.8" r="1.25" fill="#fff"/><circle cx="11.8" cy="11.8" r="1.25" fill="#fff"/></svg>
<svg style="left:204px;top:740.7px;" width="17" height="17" viewBox="0 0 17 17"><rect x="1.4" y="1.4" width="14.2" height="14.2" rx="2.4" fill="none" stroke="#fff" stroke-width="1.4"/><path d="M5.6 5.6 L11.4 11.4 M11.4 5.6 L5.6 11.4" stroke="#fff" stroke-width="1.4" stroke-linecap="round"/></svg>
<div style="left:248.9px;top:722.7px;width:30.8px;height:30.8px;background:#8a50f2;border-radius:16px;"></div>
<svg style="left:256px;top:728.6px;" width="17" height="20" viewBox="0 0 17 20"><path d="M10.6 2.6 V13.6" stroke="#111" stroke-width="1.7" stroke-linecap="round"/><ellipse cx="8" cy="14" rx="3.2" ry="2.5" transform="rotate(-18 8 14)" fill="#111"/></svg>
<div style="left:2px;top:775.5px;width:40.2px;height:78.3px;background:#121214;"></div>
<div style="left:42.2px;top:776.4px;width:1px;height:78.3px;background:#202022;"></div>
<div style="left:294.3px;top:776.2px;width:1007.5px;height:1.2px;background:#1c1c1e;"></div>
<svg style="left:16px;top:807.9px;" width="14" height="17" viewBox="0 0 14 17"><path d="M3.4 2.4 L10.4 8.5 L3.4 14.6" fill="none" stroke="#fff" stroke-width="1.5" stroke-linecap="round" stroke-linejoin="round"/></svg>
<div class="t" style="top:787.00px;height:18px;line-height:18px;font-size:14.2px;color:#f2f2f4;white-space:nowrap;letter-spacing:0.38px;left:52.43px;">3e : 2</div>
<svg style="left:91.4px;top:790.4px;" width="10" height="13" viewBox="0 0 10 13"><g fill="none" stroke="#5a5a5e" stroke-width="1.1" stroke-linecap="round" stroke-linejoin="round"><path d="M2 4.7 L4.8 1.9 L7.6 4.7"/><path d="M2 8.1 L4.8 10.9 L7.6 8.1"/></g></svg>
<div class="t" style="top:787.00px;height:18px;line-height:18px;font-size:14.2px;color:#8e8e93;white-space:nowrap;letter-spacing:0.1px;left:145.8px;">Activé/Désa...</div>
<div style="left:53px;top:812.3px;width:41.3px;height:30.2px;background:#222224;border-radius:6px;"></div>
<div class="t" style="top:818.00px;height:20px;line-height:20px;font-size:15.4px;color:#f2f2f4;white-space:nowrap;left:53.4px;width:40px;text-align:center;">M</div>
<div style="left:96.9px;top:812.3px;width:41.3px;height:30.2px;background:#222224;border-radius:6px;"></div>
<div class="t" style="top:818.00px;height:20px;line-height:20px;font-size:15.4px;color:#f2f2f4;white-space:nowrap;left:97.3px;width:40px;text-align:center;">S</div>
<div style="left:148.2px;top:812.3px;width:41.4px;height:30.2px;background:#222224;border-radius:6px;"></div>
<div style="left:192.1px;top:812.3px;width:41.5px;height:30.2px;background:#222224;border-radius:6px;"></div>
<svg style="left:160px;top:819px;" width="17" height="17" viewBox="0 0 17 17"><rect x="1.4" y="1.4" width="14.2" height="14.2" rx="2.4" fill="none" stroke="#fff" stroke-width="1.4"/><circle cx="5.2" cy="5.2" r="1.25" fill="#fff"/><circle cx="11.8" cy="5.2" r="1.25" fill="#fff"/><circle cx="8.5" cy="8.5" r="1.25" fill="#fff"/><circle cx="5.2" cy="11.8" r="1.25" fill="#fff"/><circle cx="11.8" cy="11.8" r="1.25" fill="#fff"/></svg>
<svg style="left:204px;top:819px;" width="17" height="17" viewBox="0 0 17 17"><rect x="1.4" y="1.4" width="14.2" height="14.2" rx="2.4" fill="none" stroke="#fff" stroke-width="1.4"/><path d="M5.6 5.6 L11.4 11.4 M11.4 5.6 L5.6 11.4" stroke="#fff" stroke-width="1.4" stroke-linecap="round"/></svg>
<div style="left:248.9px;top:801px;width:30.8px;height:30.8px;background:#8a50f2;border-radius:16px;"></div>
<svg style="left:256px;top:806.9px;" width="17" height="20" viewBox="0 0 17 20"><path d="M10.6 2.6 V13.6" stroke="#111" stroke-width="1.7" stroke-linecap="round"/><ellipse cx="8" cy="14" rx="3.2" ry="2.5" transform="rotate(-18 8 14)" fill="#111"/></svg>
<div style="left:2px;top:854.7px;width:292.3px;height:77.9px;background:#29292b;"></div>
<div style="left:2px;top:854.7px;width:40.2px;height:77.9px;background:#262628;"></div>
<div style="left:42.2px;top:854.7px;width:1px;height:77.9px;background:#303032;"></div>
<div style="left:294.3px;top:854.5px;width:1007.5px;height:1.2px;background:#1c1c1e;"></div>
<svg style="left:16px;top:886.2px;" width="14" height="17" viewBox="0 0 14 17"><path d="M3.4 2.4 L10.4 8.5 L3.4 14.6" fill="none" stroke="#fff" stroke-width="1.5" stroke-linecap="round" stroke-linejoin="round"/></svg>
<div class="t" style="top:865.00px;height:18px;line-height:18px;font-size:14.2px;color:#f2f2f4;white-space:nowrap;letter-spacing:0.11px;left:51.86px;">Fond...ale : 2</div>
<svg style="left:137.6px;top:868.7px;" width="10" height="13" viewBox="0 0 10 13"><g fill="none" stroke="#5a5a5e" stroke-width="1.1" stroke-linecap="round" stroke-linejoin="round"><path d="M2 4.7 L4.8 1.9 L7.6 4.7"/><path d="M2 8.1 L4.8 10.9 L7.6 8.1"/></g></svg>
<div class="t" style="top:865.00px;height:18px;line-height:18px;font-size:14.2px;color:#8e8e93;white-space:nowrap;letter-spacing:0.11px;left:168.9px;">Activé/D...</div>
<div style="left:53px;top:890.6px;width:41.3px;height:30.2px;background:#323234;border-radius:6px;"></div>
<div class="t" style="top:896.00px;height:20px;line-height:20px;font-size:15.4px;color:#f2f2f4;white-space:nowrap;left:53.4px;width:40px;text-align:center;">M</div>
<div style="left:96.9px;top:890.6px;width:41.3px;height:30.2px;background:#323234;border-radius:6px;"></div>
<div class="t" style="top:896.00px;height:20px;line-height:20px;font-size:15.4px;color:#f2f2f4;white-space:nowrap;left:97.3px;width:40px;text-align:center;">S</div>
<div style="left:148.2px;top:890.6px;width:41.4px;height:30.2px;background:#323234;border-radius:6px;"></div>
<div style="left:192.1px;top:890.6px;width:41.5px;height:30.2px;background:#323234;border-radius:6px;"></div>
<svg style="left:160px;top:897.3px;" width="17" height="17" viewBox="0 0 17 17"><rect x="1.4" y="1.4" width="14.2" height="14.2" rx="2.4" fill="none" stroke="#fff" stroke-width="1.4"/><circle cx="5.2" cy="5.2" r="1.25" fill="#fff"/><circle cx="11.8" cy="5.2" r="1.25" fill="#fff"/><circle cx="8.5" cy="8.5" r="1.25" fill="#fff"/><circle cx="5.2" cy="11.8" r="1.25" fill="#fff"/><circle cx="11.8" cy="11.8" r="1.25" fill="#fff"/></svg>
<svg style="left:204px;top:897.3px;" width="17" height="17" viewBox="0 0 17 17"><rect x="1.4" y="1.4" width="14.2" height="14.2" rx="2.4" fill="none" stroke="#fff" stroke-width="1.4"/><path d="M5.6 5.6 L11.4 11.4 M11.4 5.6 L5.6 11.4" stroke="#fff" stroke-width="1.4" stroke-linecap="round"/></svg>
<div style="left:248.9px;top:879.3px;width:30.8px;height:30.8px;background:#8a50f2;border-radius:16px;"></div>
<svg style="left:256px;top:885.2px;" width="17" height="20" viewBox="0 0 17 20"><path d="M10.6 2.6 V13.6" stroke="#111" stroke-width="1.7" stroke-linecap="round"/><ellipse cx="8" cy="14" rx="3.2" ry="2.5" transform="rotate(-18 8 14)" fill="#111"/></svg>
<svg style="left:294px;top:540px;" width="1008" height="393" viewBox="0 0 1008 393"><rect x="10.65" y="7.50" width="60.95" height="67.2" rx="4" fill="#020203"/><rect x="11.75" y="8.60" width="58.75" height="65" rx="3" fill="#221a33"/><rect x="72.22" y="7.50" width="60.95" height="67.2" rx="4" fill="#020203"/><rect x="73.32" y="8.60" width="58.75" height="65" rx="3" fill="#6f3bcb"/><rect x="74.82" y="8.60" width="55.75" height="1" fill="#7a46d8"/><rect x="133.79" y="7.50" width="60.95" height="67.2" rx="4" fill="#020203"/><rect x="134.89" y="8.60" width="58.75" height="65" rx="3" fill="#221a33"/><rect x="195.36" y="7.50" width="59.95" height="67.2" rx="4" fill="#020203"/><rect x="196.46" y="8.60" width="57.75" height="65" rx="3" fill="#221a33"/><rect x="258.93" y="7.50" width="58.95" height="67.2" rx="4" fill="#020203"/><rect x="260.03" y="8.60" width="56.75" height="65" rx="3" fill="#221a33"/><rect x="318.50" y="7.50" width="60.95" height="67.2" rx="4" fill="#020203"/><rect x="319.60" y="8.60" width="58.75" height="65" rx="3" fill="#6f3bcb"/><rect x="321.10" y="8.60" width="55.75" height="1" fill="#7a46d8"/><rect x="380.07" y="7.50" width="60.95" height="67.2" rx="4" fill="#020203"/><rect x="381.17" y="8.60" width="58.75" height="65" rx="3" fill="#221a33"/><rect x="441.64" y="7.50" width="59.95" height="67.2" rx="4" fill="#020203"/><rect x="442.74" y="8.60" width="57.75" height="65" rx="3" fill="#221a33"/><rect x="505.21" y="7.50" width="58.95" height="67.2" rx="4" fill="#020203"/><rect x="506.31" y="8.60" width="56.75" height="65" rx="3" fill="#6f3bcb"/><rect x="507.81" y="8.60" width="53.75" height="1" fill="#7a46d8"/><rect x="564.78" y="7.50" width="60.95" height="67.2" rx="4" fill="#020203"/><rect x="565.88" y="8.60" width="58.75" height="65" rx="3" fill="#6f3bcb"/><rect x="567.38" y="8.60" width="55.75" height="1" fill="#7a46d8"/><rect x="626.35" y="7.50" width="60.95" height="67.2" rx="4" fill="#020203"/><rect x="627.45" y="8.60" width="58.75" height="65" rx="3" fill="#221a33"/><rect x="687.92" y="7.50" width="59.95" height="67.2" rx="4" fill="#020203"/><rect x="689.02" y="8.60" width="57.75" height="65" rx="3" fill="#6f3bcb"/><rect x="690.52" y="8.60" width="54.75" height="1" fill="#7a46d8"/><rect x="751.49" y="7.50" width="58.95" height="67.2" rx="4" fill="#020203"/><rect x="752.59" y="8.60" width="56.75" height="65" rx="3" fill="#221a33"/><rect x="811.06" y="7.50" width="60.95" height="67.2" rx="4" fill="#020203"/><rect x="812.16" y="8.60" width="58.75" height="65" rx="3" fill="#6f3bcb"/><rect x="813.66" y="8.60" width="55.75" height="1" fill="#7a46d8"/><rect x="872.63" y="7.50" width="60.95" height="67.2" rx="4" fill="#020203"/><rect x="873.73" y="8.60" width="58.75" height="65" rx="3" fill="#221a33"/><rect x="934.20" y="7.50" width="60.95" height="67.2" rx="4" fill="#020203"/><rect x="935.30" y="8.60" width="58.75" height="65" rx="3" fill="#6f3bcb"/><rect x="936.80" y="8.60" width="55.75" height="1" fill="#7a46d8"/><rect x="10.65" y="85.75" width="60.95" height="67.2" rx="4" fill="#020203"/><rect x="11.75" y="86.85" width="58.75" height="65" rx="3" fill="#221a33"/><rect x="72.22" y="85.75" width="60.95" height="67.2" rx="4" fill="#020203"/><rect x="73.32" y="86.85" width="58.75" height="65" rx="3" fill="#221a33"/><rect x="133.79" y="85.75" width="60.95" height="67.2" rx="4" fill="#020203"/><rect x="134.89" y="86.85" width="58.75" height="65" rx="3" fill="#221a33"/><rect x="195.36" y="85.75" width="59.95" height="67.2" rx="4" fill="#020203"/><rect x="196.46" y="86.85" width="57.75" height="65" rx="3" fill="#221a33"/><rect x="258.93" y="85.75" width="58.95" height="67.2" rx="4" fill="#020203"/><rect x="260.03" y="86.85" width="56.75" height="65" rx="3" fill="#6f3bcb"/><rect x="261.53" y="86.85" width="53.75" height="1" fill="#7a46d8"/><rect x="318.50" y="85.75" width="60.95" height="67.2" rx="4" fill="#020203"/><rect x="319.60" y="86.85" width="58.75" height="65" rx="3" fill="#221a33"/><rect x="380.07" y="85.75" width="60.95" height="67.2" rx="4" fill="#020203"/><rect x="381.17" y="86.85" width="58.75" height="65" rx="3" fill="#6f3bcb"/><rect x="382.67" y="86.85" width="55.75" height="1" fill="#7a46d8"/><rect x="441.64" y="85.75" width="59.95" height="67.2" rx="4" fill="#020203"/><rect x="442.74" y="86.85" width="57.75" height="65" rx="3" fill="#221a33"/><rect x="505.21" y="85.75" width="58.95" height="67.2" rx="4" fill="#020203"/><rect x="506.31" y="86.85" width="56.75" height="65" rx="3" fill="#6f3bcb"/><rect x="507.81" y="86.85" width="53.75" height="1" fill="#7a46d8"/><rect x="564.78" y="85.75" width="60.95" height="67.2" rx="4" fill="#020203"/><rect x="565.88" y="86.85" width="58.75" height="65" rx="3" fill="#221a33"/><rect x="626.35" y="85.75" width="60.95" height="67.2" rx="4" fill="#020203"/><rect x="627.45" y="86.85" width="58.75" height="65" rx="3" fill="#221a33"/><rect x="687.92" y="85.75" width="59.95" height="67.2" rx="4" fill="#020203"/><rect x="689.02" y="86.85" width="57.75" height="65" rx="3" fill="#221a33"/><rect x="751.49" y="85.75" width="58.95" height="67.2" rx="4" fill="#020203"/><rect x="752.59" y="86.85" width="56.75" height="65" rx="3" fill="#221a33"/><rect x="811.06" y="85.75" width="60.95" height="67.2" rx="4" fill="#020203"/><rect x="812.16" y="86.85" width="58.75" height="65" rx="3" fill="#221a33"/><rect x="872.63" y="85.75" width="60.95" height="67.2" rx="4" fill="#020203"/><rect x="873.73" y="86.85" width="58.75" height="65" rx="3" fill="#221a33"/><rect x="934.20" y="85.75" width="60.95" height="67.2" rx="4" fill="#020203"/><rect x="935.30" y="86.85" width="58.75" height="65" rx="3" fill="#221a33"/><rect x="10.65" y="164.00" width="60.95" height="67.2" rx="4" fill="#020203"/><rect x="11.75" y="165.10" width="58.75" height="65" rx="3" fill="#221a33"/><rect x="72.22" y="164.00" width="60.95" height="67.2" rx="4" fill="#020203"/><rect x="73.32" y="165.10" width="58.75" height="65" rx="3" fill="#221a33"/><rect x="133.79" y="164.00" width="60.95" height="67.2" rx="4" fill="#020203"/><rect x="134.89" y="165.10" width="58.75" height="65" rx="3" fill="#6f3bcb"/><rect x="136.39" y="165.10" width="55.75" height="1" fill="#7a46d8"/><rect x="195.36" y="164.00" width="59.95" height="67.2" rx="4" fill="#020203"/><rect x="196.46" y="165.10" width="57.75" height="65" rx="3" fill="#6f3bcb"/><rect x="197.96" y="165.10" width="54.75" height="1" fill="#7a46d8"/><rect x="258.93" y="164.00" width="58.95" height="67.2" rx="4" fill="#020203"/><rect x="260.03" y="165.10" width="56.75" height="65" rx="3" fill="#221a33"/><rect x="318.50" y="164.00" width="60.95" height="67.2" rx="4" fill="#020203"/><rect x="319.60" y="165.10" width="58.75" height="65" rx="3" fill="#6f3bcb"/><rect x="321.10" y="165.10" width="55.75" height="1" fill="#7a46d8"/><rect x="380.07" y="164.00" width="60.95" height="67.2" rx="4" fill="#020203"/><rect x="381.17" y="165.10" width="58.75" height="65" rx="3" fill="#221a33"/><rect x="441.64" y="164.00" width="59.95" height="67.2" rx="4" fill="#020203"/><rect x="442.74" y="165.10" width="57.75" height="65" rx="3" fill="#221a33"/><rect x="505.21" y="164.00" width="58.95" height="67.2" rx="4" fill="#020203"/><rect x="506.31" y="165.10" width="56.75" height="65" rx="3" fill="#6f3bcb"/><rect x="507.81" y="165.10" width="53.75" height="1" fill="#7a46d8"/><rect x="564.78" y="164.00" width="60.95" height="67.2" rx="4" fill="#020203"/><rect x="565.88" y="165.10" width="58.75" height="65" rx="3" fill="#6f3bcb"/><rect x="567.38" y="165.10" width="55.75" height="1" fill="#7a46d8"/><rect x="626.35" y="164.00" width="60.95" height="67.2" rx="4" fill="#020203"/><rect x="627.45" y="165.10" width="58.75" height="65" rx="3" fill="#221a33"/><rect x="687.92" y="164.00" width="59.95" height="67.2" rx="4" fill="#020203"/><rect x="689.02" y="165.10" width="57.75" height="65" rx="3" fill="#221a33"/><rect x="751.49" y="164.00" width="58.95" height="67.2" rx="4" fill="#020203"/><rect x="752.59" y="165.10" width="56.75" height="65" rx="3" fill="#221a33"/><rect x="811.06" y="164.00" width="60.95" height="67.2" rx="4" fill="#020203"/><rect x="812.16" y="165.10" width="58.75" height="65" rx="3" fill="#6f3bcb"/><rect x="813.66" y="165.10" width="55.75" height="1" fill="#7a46d8"/><rect x="872.63" y="164.00" width="60.95" height="67.2" rx="4" fill="#020203"/><rect x="873.73" y="165.10" width="58.75" height="65" rx="3" fill="#221a33"/><rect x="934.20" y="164.00" width="60.95" height="67.2" rx="4" fill="#020203"/><rect x="935.30" y="165.10" width="58.75" height="65" rx="3" fill="#221a33"/><rect x="10.65" y="242.25" width="60.95" height="67.2" rx="4" fill="#020203"/><rect x="11.75" y="243.35" width="58.75" height="65" rx="3" fill="#6f3bcb"/><rect x="13.25" y="243.35" width="55.75" height="1" fill="#7a46d8"/><rect x="72.22" y="242.25" width="60.95" height="67.2" rx="4" fill="#020203"/><rect x="73.32" y="243.35" width="58.75" height="65" rx="3" fill="#6f3bcb"/><rect x="74.82" y="243.35" width="55.75" height="1" fill="#7a46d8"/><rect x="133.79" y="242.25" width="60.95" height="67.2" rx="4" fill="#020203"/><rect x="134.89" y="243.35" width="58.75" height="65" rx="3" fill="#221a33"/><rect x="195.36" y="242.25" width="59.95" height="67.2" rx="4" fill="#020203"/><rect x="196.46" y="243.35" width="57.75" height="65" rx="3" fill="#221a33"/><rect x="258.93" y="242.25" width="58.95" height="67.2" rx="4" fill="#020203"/><rect x="260.03" y="243.35" width="56.75" height="65" rx="3" fill="#6f3bcb"/><rect x="261.53" y="243.35" width="53.75" height="1" fill="#7a46d8"/><rect x="318.50" y="242.25" width="60.95" height="67.2" rx="4" fill="#020203"/><rect x="319.60" y="243.35" width="58.75" height="65" rx="3" fill="#221a33"/><rect x="380.07" y="242.25" width="60.95" height="67.2" rx="4" fill="#020203"/><rect x="381.17" y="243.35" width="58.75" height="65" rx="3" fill="#6f3bcb"/><rect x="382.67" y="243.35" width="55.75" height="1" fill="#7a46d8"/><rect x="441.64" y="242.25" width="59.95" height="67.2" rx="4" fill="#020203"/><rect x="442.74" y="243.35" width="57.75" height="65" rx="3" fill="#6f3bcb"/><rect x="444.24" y="243.35" width="54.75" height="1" fill="#7a46d8"/><rect x="505.21" y="242.25" width="58.95" height="67.2" rx="4" fill="#020203"/><rect x="506.31" y="243.35" width="56.75" height="65" rx="3" fill="#221a33"/><rect x="564.78" y="242.25" width="60.95" height="67.2" rx="4" fill="#020203"/><rect x="565.88" y="243.35" width="58.75" height="65" rx="3" fill="#6f3bcb"/><rect x="567.38" y="243.35" width="55.75" height="1" fill="#7a46d8"/><rect x="626.35" y="242.25" width="60.95" height="67.2" rx="4" fill="#020203"/><rect x="627.45" y="243.35" width="58.75" height="65" rx="3" fill="#6f3bcb"/><rect x="628.95" y="243.35" width="55.75" height="1" fill="#7a46d8"/><rect x="687.92" y="242.25" width="59.95" height="67.2" rx="4" fill="#020203"/><rect x="689.02" y="243.35" width="57.75" height="65" rx="3" fill="#221a33"/><rect x="751.49" y="242.25" width="58.95" height="67.2" rx="4" fill="#020203"/><rect x="752.59" y="243.35" width="56.75" height="65" rx="3" fill="#6f3bcb"/><rect x="754.09" y="243.35" width="53.75" height="1" fill="#7a46d8"/><rect x="811.06" y="242.25" width="60.95" height="67.2" rx="4" fill="#020203"/><rect x="812.16" y="243.35" width="58.75" height="65" rx="3" fill="#221a33"/><rect x="872.63" y="242.25" width="60.95" height="67.2" rx="4" fill="#020203"/><rect x="873.73" y="243.35" width="58.75" height="65" rx="3" fill="#221a33"/><rect x="934.20" y="242.25" width="60.95" height="67.2" rx="4" fill="#020203"/><rect x="935.30" y="243.35" width="58.75" height="65" rx="3" fill="#6f3bcb"/><rect x="936.80" y="243.35" width="55.75" height="1" fill="#7a46d8"/><rect x="10.65" y="320.50" width="60.95" height="67.2" rx="4" fill="#020203"/><rect x="11.75" y="321.60" width="58.75" height="65" rx="3" fill="#221a33"/><rect x="72.22" y="320.50" width="60.95" height="67.2" rx="4" fill="#020203"/><rect x="73.32" y="321.60" width="58.75" height="65" rx="3" fill="#221a33"/><rect x="133.79" y="320.50" width="60.95" height="67.2" rx="4" fill="#020203"/><rect x="134.89" y="321.60" width="58.75" height="65" rx="3" fill="#221a33"/><rect x="195.36" y="320.50" width="59.95" height="67.2" rx="4" fill="#020203"/><rect x="196.46" y="321.60" width="57.75" height="65" rx="3" fill="#221a33"/><rect x="258.93" y="320.50" width="58.95" height="67.2" rx="4" fill="#020203"/><rect x="260.63" y="322.20" width="55.55" height="63.8" rx="2.6" fill="#6f3bcb" stroke="#e6e2f2" stroke-width="1.2"/><rect x="318.50" y="320.50" width="60.95" height="67.2" rx="4" fill="#020203"/><rect x="319.60" y="321.60" width="58.75" height="65" rx="3" fill="#221a33"/><rect x="380.07" y="320.50" width="60.95" height="67.2" rx="4" fill="#020203"/><rect x="381.17" y="321.60" width="58.75" height="65" rx="3" fill="#221a33"/><rect x="441.64" y="320.50" width="59.95" height="67.2" rx="4" fill="#020203"/><rect x="442.74" y="321.60" width="57.75" height="65" rx="3" fill="#221a33"/><rect x="505.21" y="320.50" width="58.95" height="67.2" rx="4" fill="#020203"/><rect x="506.31" y="321.60" width="56.75" height="65" rx="3" fill="#221a33"/><rect x="564.78" y="320.50" width="60.95" height="67.2" rx="4" fill="#020203"/><rect x="565.88" y="321.60" width="58.75" height="65" rx="3" fill="#221a33"/><rect x="626.35" y="320.50" width="60.95" height="67.2" rx="4" fill="#020203"/><rect x="627.45" y="321.60" width="58.75" height="65" rx="3" fill="#221a33"/><rect x="687.92" y="320.50" width="59.95" height="67.2" rx="4" fill="#020203"/><rect x="689.02" y="321.60" width="57.75" height="65" rx="3" fill="#221a33"/><rect x="751.49" y="320.50" width="58.95" height="67.2" rx="4" fill="#020203"/><rect x="752.59" y="321.60" width="56.75" height="65" rx="3" fill="#6f3bcb"/><rect x="754.09" y="321.60" width="53.75" height="1" fill="#7a46d8"/><rect x="811.06" y="320.50" width="60.95" height="67.2" rx="4" fill="#020203"/><rect x="812.16" y="321.60" width="58.75" height="65" rx="3" fill="#221a33"/><rect x="872.63" y="320.50" width="60.95" height="67.2" rx="4" fill="#020203"/><rect x="873.73" y="321.60" width="58.75" height="65" rx="3" fill="#6f3bcb"/><rect x="875.23" y="321.60" width="55.75" height="1" fill="#7a46d8"/><rect x="934.20" y="320.50" width="60.95" height="67.2" rx="4" fill="#020203"/><rect x="935.30" y="321.60" width="58.75" height="65" rx="3" fill="#221a33"/></svg>
<svg style="left:284px;top:674px;" width="10" height="27" viewBox="0 0 10 27"><rect x="3.1" y="3" width="3" height="20.9" rx="1.5" fill="#2d2d2f"/></svg>
<div style="left:0px;top:934.6px;width:1303px;height:3.6px;background:#000;"></div>
<div style="left:0px;top:938px;width:1303px;height:72px;background:#212123;border-radius:0 0 4px 4px;"></div>
<svg style="left:19px;top:952.6px;" width="24" height="20" viewBox="0 0 24 20"><rect x="2.2" y="2.3" width="14.2" height="11.4" rx="2.2" fill="none" stroke="#fff" stroke-width="1.4"/><rect x="5.7" y="5.6" width="15.4" height="12.4" rx="2.2" fill="#fff" stroke="#212123" stroke-width="0.8"/><path d="M11.6 14.6 V9.6 L16.6 8.4 V13.6" fill="none" stroke="#1a1a1a" stroke-width="1.1" stroke-linejoin="round"/><ellipse cx="10.6" cy="14.8" rx="1.4" ry="1.1" fill="#1a1a1a"/><ellipse cx="15.6" cy="13.8" rx="1.4" ry="1.1" fill="#1a1a1a"/></svg>
<div style="left:37px;top:948.8px;width:10px;height:10px;background:#e9514d;border-radius:5px;"></div>
<svg style="left:65.8px;top:954px;" width="18" height="18" viewBox="0 0 18 18"><rect x="1.6" y="1.7" width="14.4" height="6.2" rx="3.1" fill="none" stroke="#fff" stroke-width="1.4"/><rect x="3.2" y="3.5" width="5.6" height="2.6" rx="1.3" fill="#fff"/><rect x="0.9" y="9.3" width="15.8" height="7.3" rx="3.6" fill="#fff"/><rect x="8.4" y="11.4" width="6.2" height="3.1" rx="1.5" fill="#212123"/></svg>
<svg style="left:110.8px;top:953px;" width="16" height="19" viewBox="0 0 16 19"><rect x="1.7" y="1.6" width="12.2" height="15.8" rx="1.8" fill="none" stroke="#fff" stroke-width="1.4"/><path d="M7.8 4 V15" stroke="#fff" stroke-width="1.1" stroke-linecap="round"/><ellipse cx="7.8" cy="8.4" rx="1.5" ry="2.4" fill="#212123" stroke="#fff" stroke-width="1.1"/></svg>
<div style="left:587px;top:947px;width:41.8px;height:30.6px;background:#a9a9ad;border-radius:6px;"></div>
<svg style="left:599px;top:953px;" width="18" height="18" viewBox="0 0 18 18"><path d="M3.6 14.6 L12.2 6" stroke="#111" stroke-width="2.4" stroke-linecap="butt" fill="none"/><path d="M13.1 5.1 L14.3 3.9" stroke="#111" stroke-width="2.4" stroke-linecap="round"/><path d="M2.2 16 L4.6 15.4 L2.9 13.7 Z" fill="#111"/></svg>
<svg style="left:641.6px;top:953px;" width="20" height="21" viewBox="0 0 20 21"><circle cx="10" cy="10.6" r="5.4" fill="none" stroke="#fff" stroke-width="1.4"/><path d="M10 6.2 V11" stroke="#fff" stroke-width="1.4" stroke-linecap="round"/><circle cx="1.40" cy="10.60" r="0.8" fill="#fff"/><circle cx="18.60" cy="10.60" r="0.8" fill="#fff"/><circle cx="10.00" cy="2.00" r="0.8" fill="#fff"/><circle cx="3.92" cy="4.52" r="0.8" fill="#fff"/><circle cx="16.08" cy="4.52" r="0.8" fill="#fff"/><circle cx="3.92" cy="16.68" r="0.8" fill="#fff"/><circle cx="16.08" cy="16.68" r="0.8" fill="#fff"/></svg>
<svg style="left:685.6px;top:953.6px;" width="20" height="18" viewBox="0 0 20 18"><g fill="none" stroke="#fff" stroke-width="1.2" stroke-linecap="round"><path d="M4 1.6 V6.6 M4 11.4 V16"/><rect x="2.5" y="6.6" width="3" height="4.8" rx="1.5"/><path d="M10 1.6 V3.4 M10 8.2 V16"/><rect x="8.5" y="3.4" width="3" height="4.8" rx="1.5"/><path d="M16 1.6 V7.6 M16 12.4 V16"/><rect x="14.5" y="7.6" width="3" height="4.8" rx="1.5"/></g></svg>
<svg style="left:1263.4px;top:954.6px;" width="20" height="16" viewBox="0 0 20 16"><rect x="0.4" y="0.5" width="18.6" height="14.8" rx="1.8" fill="#fff"/><rect x="4.1" y="0.5" width="2.7" height="8.8" fill="#212123"/><rect x="8.3" y="0.5" width="2.7" height="8.8" fill="#212123"/><rect x="12.5" y="0.5" width="2.7" height="8.8" fill="#212123"/><rect x="5.1" y="9.3" width="0.7" height="6" fill="#212123"/><rect x="9.3" y="9.3" width="0.7" height="6" fill="#9a9a9a"/><rect x="13.5" y="9.3" width="0.7" height="6" fill="#212123"/></svg>
<svg style="left:1283px;top:989px;" width="18" height="18" viewBox="0 0 18 18"><path d="M3.2 15.8 Q14.6 15.6 15.6 3.2" fill="none" stroke="#fff" stroke-width="2.6" stroke-linecap="round"/></svg>
<div class="t" style="top:-3.00px;height:36px;line-height:36px;font-size:27.5px;color:#000;white-space:nowrap;letter-spacing:0.91px;left:377.2px;">Accords</div>
<div class="t" style="top:-3.00px;height:36px;line-height:36px;font-size:27.5px;color:#000;white-space:nowrap;letter-spacing:0.9px;left:897.4px;">Bouton de tonalité</div>
<div class="t" style="top:1035.00px;height:36px;line-height:36px;font-size:27.5px;color:#000;white-space:nowrap;letter-spacing:1.03px;left:144.4px;">Degrés d’accord</div>
<svg style="left:0;top:0;pointer-events:none;" width="1303" height="1075" viewBox="0 0 1303 1075"><g fill="#858585"><rect x="369" y="15.4" width="2.3" height="210.4"/><rect x="369" y="223.5" width="11.2" height="2.3"/><rect x="1138.6" y="16.2" width="2.5" height="485"/><rect x="136.2" y="923" width="2.7" height="131.2"/><rect x="132" y="551" width="12.2" height="2.7"/><rect x="141.2" y="551" width="3" height="374.6"/><rect x="132" y="922.9" width="12.2" height="2.7"/></g></svg>
</div></body></html>
